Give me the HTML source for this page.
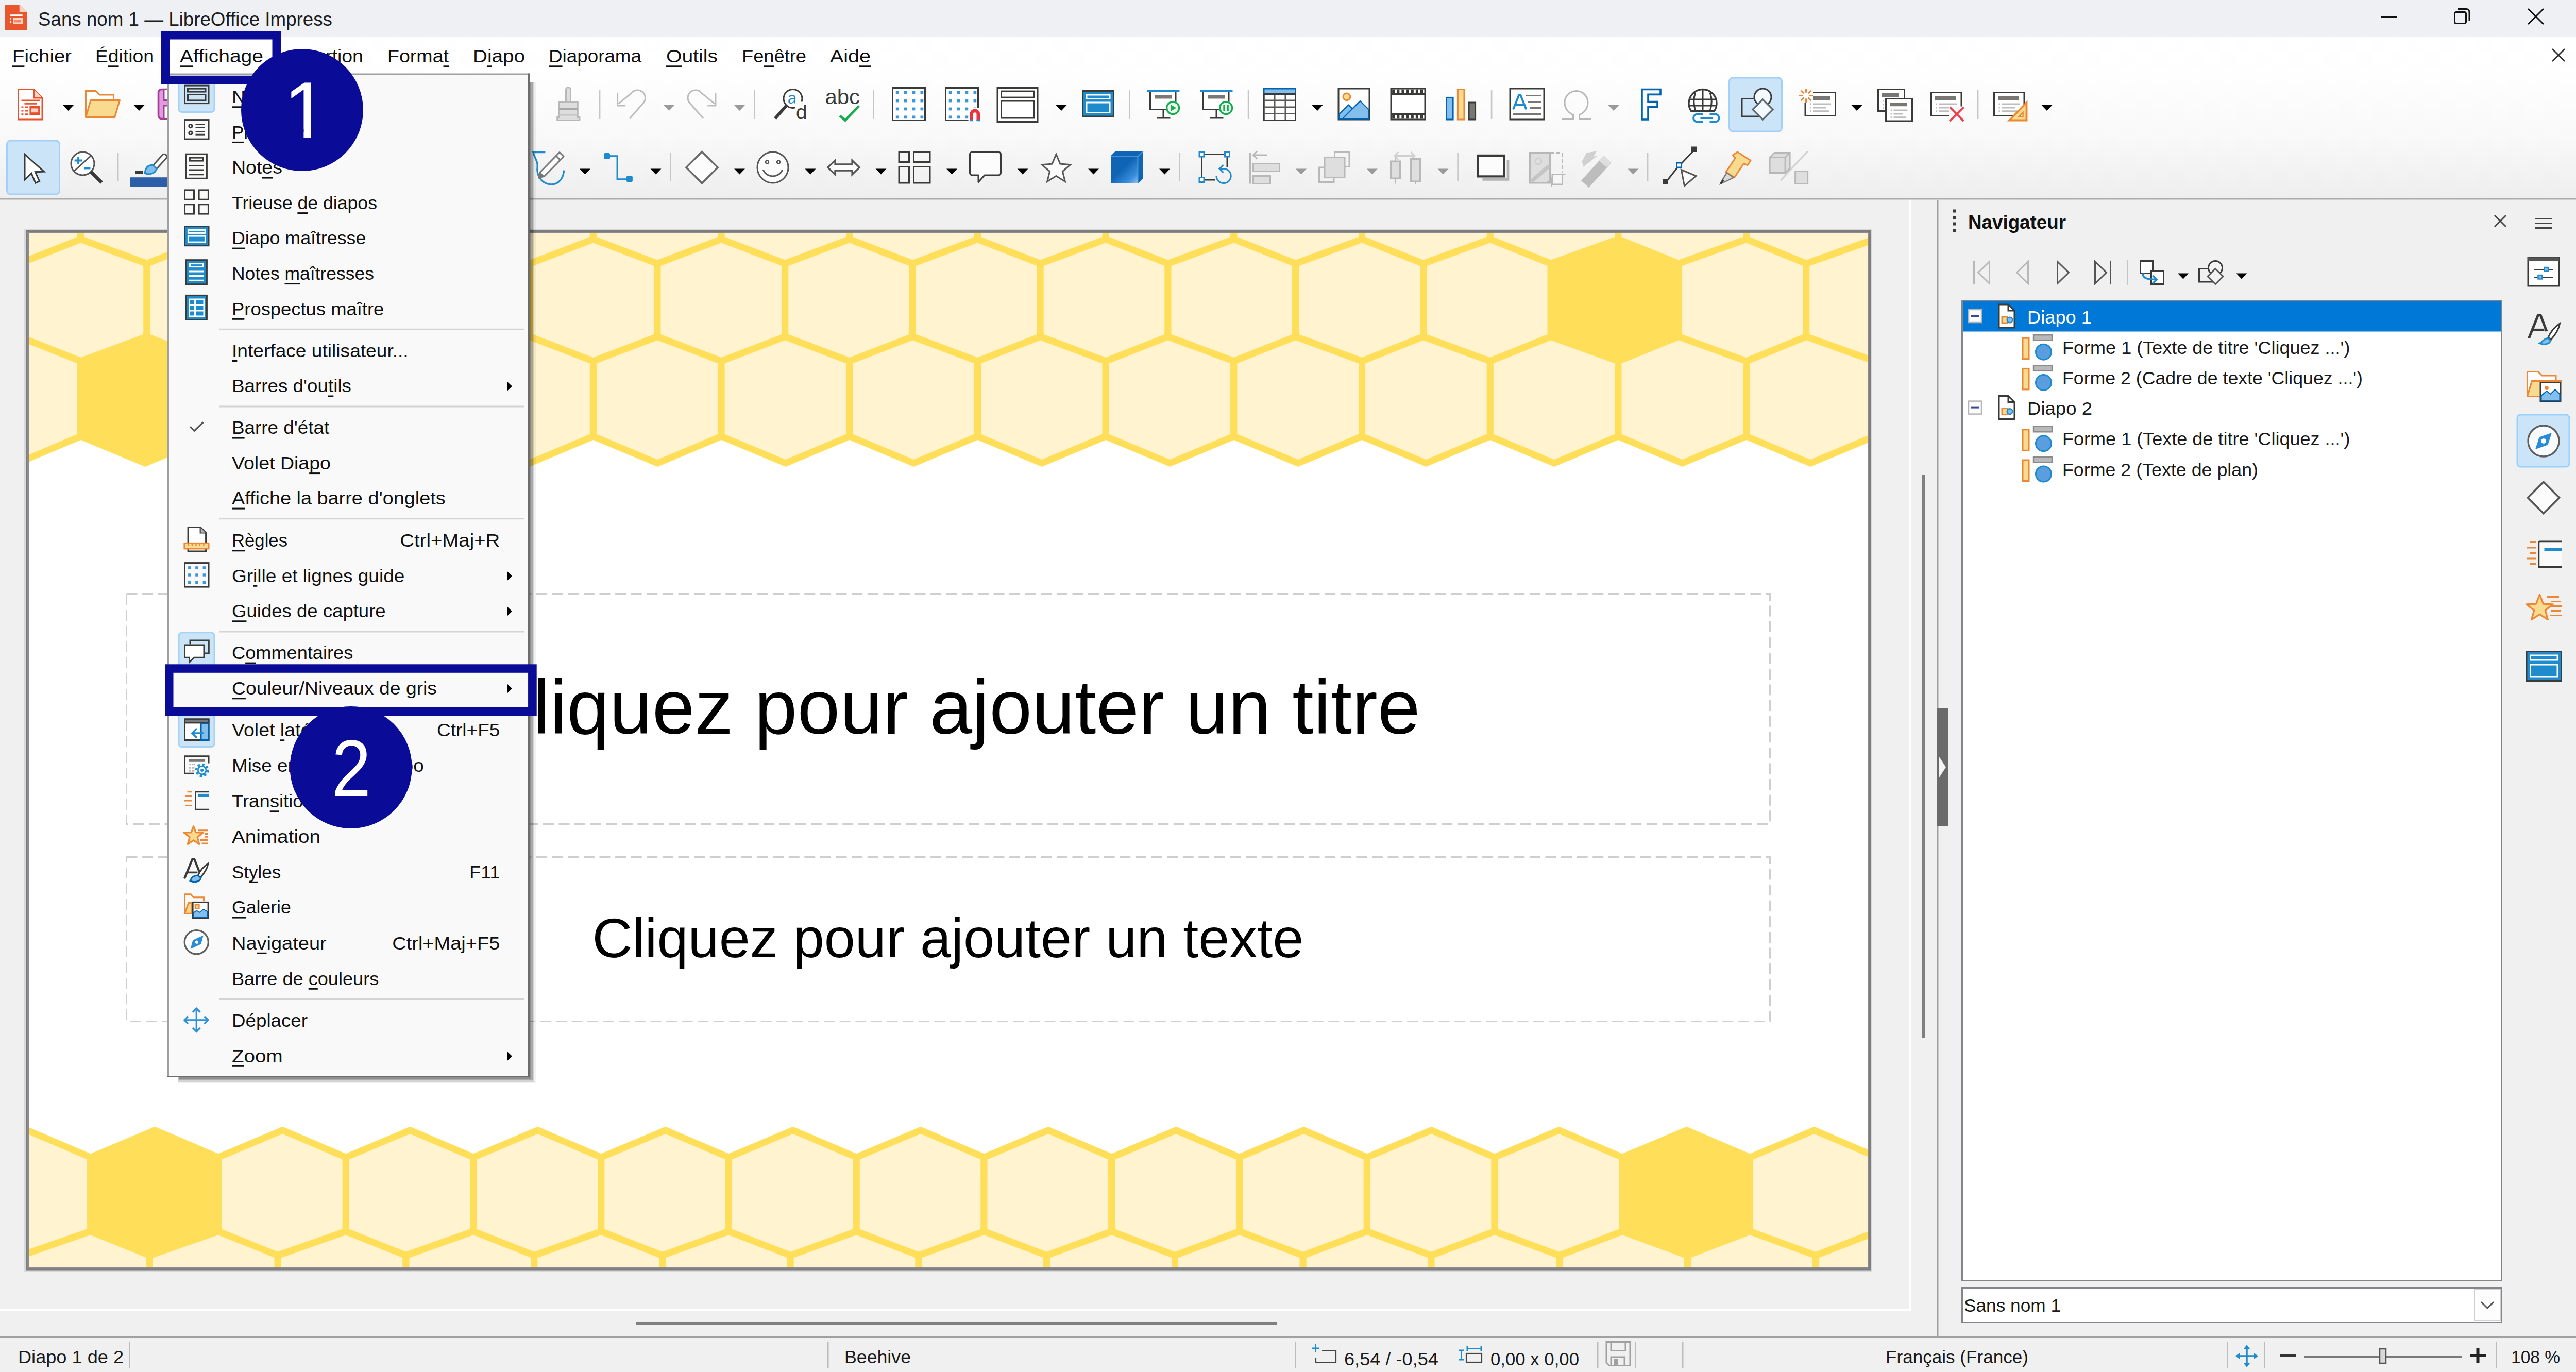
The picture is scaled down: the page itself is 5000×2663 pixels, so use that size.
<!DOCTYPE html>
<html lang="fr"><head><meta charset="utf-8"><title>Sans nom 1 — LibreOffice Impress</title>
<style>html,body{margin:0;padding:0;background:#f0f0f0;width:5000px;height:2663px;overflow:hidden}</style></head>
<body>
<svg width="5000" height="2663" viewBox="0 0 5000 2663" style="display:block;font-family:'Liberation Sans', sans-serif">
<rect x="0" y="0" width="5000" height="2663" fill="#f0f0f0" />
<!-- slide -->
<defs><clipPath id="slideclip"><rect x="56" y="453" width="3569" height="2006.5"/></clipPath></defs>
<rect x="47" y="444" width="3587" height="2024.5" fill="#d9d9d9" />
<rect x="50" y="447" width="3581" height="2018.5" fill="#7d7d7d" />
<rect x="53" y="450" width="3575" height="2012.5" fill="#8b8a93" />
<rect x="56" y="453" width="3569" height="2006.5" fill="#ffffff" />
<g clip-path="url(#slideclip)" stroke="#ffde59" stroke-width="13" stroke-linejoin="miter" fill="#fff4cf">
<polygon points="-92.1,264.5 -92.1,464.5 37.2,511.6 156.6,464.5 156.6,264.5"/>
<polygon points="156.6,264.5 156.6,464.5 285.0,511.6 405.3,464.5 405.3,264.5"/>
<polygon points="405.3,264.5 405.3,464.5 532.8,511.6 654.0,464.5 654.0,264.5"/>
<polygon points="654.0,264.5 654.0,464.5 780.5,511.6 902.7,464.5 902.7,264.5"/>
<polygon points="902.7,264.5 902.7,464.5 1028.2,511.6 1151.4,464.5 1151.4,264.5"/>
<polygon points="1151.4,264.5 1151.4,464.5 1276.0,511.6 1400.1,464.5 1400.1,264.5"/>
<polygon points="1400.1,264.5 1400.1,464.5 1523.8,511.6 1648.8,464.5 1648.8,264.5"/>
<polygon points="1648.8,264.5 1648.8,464.5 1771.5,511.6 1897.5,464.5 1897.5,264.5"/>
<polygon points="1897.5,264.5 1897.5,464.5 2019.2,511.6 2146.2,464.5 2146.2,264.5"/>
<polygon points="2146.2,264.5 2146.2,464.5 2267.0,511.6 2394.9,464.5 2394.9,264.5"/>
<polygon points="2394.9,264.5 2394.9,464.5 2514.8,511.6 2643.6,464.5 2643.6,264.5"/>
<polygon points="2643.6,264.5 2643.6,464.5 2762.5,511.6 2892.3,464.5 2892.3,264.5"/>
<polygon points="2892.3,264.5 2892.3,464.5 3010.2,511.6 3141.0,464.5 3141.0,264.5"/>
<polygon points="3141.0,264.5 3141.0,464.5 3258.0,511.6 3389.7,464.5 3389.7,264.5"/>
<polygon points="3389.7,264.5 3389.7,464.5 3505.8,511.6 3638.4,464.5 3638.4,264.5"/>
<polygon points="3638.4,264.5 3638.4,464.5 3753.5,511.6 3887.1,464.5 3887.1,264.5"/>
<polygon points="-92.1,464.5 37.2,511.6 37.2,653.5 -92.1,701.0 -210.5,653.5 -210.5,511.6"/>
<polygon points="156.6,464.5 285.0,511.6 285.0,653.5 156.6,701.0 37.2,653.5 37.2,511.6"/>
<polygon points="405.3,464.5 532.8,511.6 532.8,653.5 405.3,701.0 285.0,653.5 285.0,511.6"/>
<polygon points="654.0,464.5 780.5,511.6 780.5,653.5 654.0,701.0 532.8,653.5 532.8,511.6"/>
<polygon points="902.7,464.5 1028.2,511.6 1028.2,653.5 902.7,701.0 780.5,653.5 780.5,511.6"/>
<polygon points="1151.4,464.5 1276.0,511.6 1276.0,653.5 1151.4,701.0 1028.2,653.5 1028.2,511.6"/>
<polygon points="1400.1,464.5 1523.8,511.6 1523.8,653.5 1400.1,701.0 1276.0,653.5 1276.0,511.6"/>
<polygon points="1648.8,464.5 1771.5,511.6 1771.5,653.5 1648.8,701.0 1523.8,653.5 1523.8,511.6"/>
<polygon points="1897.5,464.5 2019.2,511.6 2019.2,653.5 1897.5,701.0 1771.5,653.5 1771.5,511.6"/>
<polygon points="2146.2,464.5 2267.0,511.6 2267.0,653.5 2146.2,701.0 2019.2,653.5 2019.2,511.6"/>
<polygon points="2394.9,464.5 2514.8,511.6 2514.8,653.5 2394.9,701.0 2267.0,653.5 2267.0,511.6"/>
<polygon points="2643.6,464.5 2762.5,511.6 2762.5,653.5 2643.6,701.0 2514.8,653.5 2514.8,511.6"/>
<polygon points="2892.3,464.5 3010.2,511.6 3010.2,653.5 2892.3,701.0 2762.5,653.5 2762.5,511.6"/>
<polygon fill="#ffde59" points="3141.0,464.5 3258.0,511.6 3258.0,653.5 3141.0,701.0 3010.2,653.5 3010.2,511.6"/>
<polygon points="3389.7,464.5 3505.8,511.6 3505.8,653.5 3389.7,701.0 3258.0,653.5 3258.0,511.6"/>
<polygon points="3638.4,464.5 3753.5,511.6 3753.5,653.5 3638.4,701.0 3505.8,653.5 3505.8,511.6"/>
<polygon points="37.2,653.5 156.6,701.0 156.6,847.0 33.4,899.0 -92.1,847.0 -92.1,701.0"/>
<polygon fill="#ffde59" points="285.0,653.5 405.3,701.0 405.3,847.0 282.0,899.0 156.6,847.0 156.6,701.0"/>
<polygon points="532.8,653.5 654.0,701.0 654.0,847.0 530.6,899.0 405.3,847.0 405.3,701.0"/>
<polygon points="780.5,653.5 902.7,701.0 902.7,847.0 779.2,899.0 654.0,847.0 654.0,701.0"/>
<polygon points="1028.2,653.5 1151.4,701.0 1151.4,847.0 1027.8,899.0 902.7,847.0 902.7,701.0"/>
<polygon points="1276.0,653.5 1400.1,701.0 1400.1,847.0 1276.4,899.0 1151.4,847.0 1151.4,701.0"/>
<polygon points="1523.8,653.5 1648.8,701.0 1648.8,847.0 1525.0,899.0 1400.1,847.0 1400.1,701.0"/>
<polygon points="1771.5,653.5 1897.5,701.0 1897.5,847.0 1773.6,899.0 1648.8,847.0 1648.8,701.0"/>
<polygon points="2019.2,653.5 2146.2,701.0 2146.2,847.0 2022.2,899.0 1897.5,847.0 1897.5,701.0"/>
<polygon points="2267.0,653.5 2394.9,701.0 2394.9,847.0 2270.8,899.0 2146.2,847.0 2146.2,701.0"/>
<polygon points="2514.8,653.5 2643.6,701.0 2643.6,847.0 2519.4,899.0 2394.9,847.0 2394.9,701.0"/>
<polygon points="2762.5,653.5 2892.3,701.0 2892.3,847.0 2768.0,899.0 2643.6,847.0 2643.6,701.0"/>
<polygon points="3010.2,653.5 3141.0,701.0 3141.0,847.0 3016.6,899.0 2892.3,847.0 2892.3,701.0"/>
<polygon points="3258.0,653.5 3389.7,701.0 3389.7,847.0 3265.2,899.0 3141.0,847.0 3141.0,701.0"/>
<polygon points="3505.8,653.5 3638.4,701.0 3638.4,847.0 3513.8,899.0 3389.7,847.0 3389.7,701.0"/>
<polygon points="3753.5,653.5 3887.1,701.0 3887.1,847.0 3762.4,899.0 3638.4,847.0 3638.4,701.0"/>
<polygon points="-71.9,2390.0 41.8,2436.5 41.8,2636.5 -207.0,2636.5 -207.0,2436.5"/>
<polygon points="175.8,2390.0 290.5,2436.5 290.5,2636.5 41.8,2636.5 41.8,2436.5"/>
<polygon points="423.6,2390.0 539.2,2436.5 539.2,2636.5 290.5,2636.5 290.5,2436.5"/>
<polygon points="671.3,2390.0 788.0,2436.5 788.0,2636.5 539.2,2636.5 539.2,2436.5"/>
<polygon points="919.0,2390.0 1036.8,2436.5 1036.8,2636.5 788.0,2636.5 788.0,2436.5"/>
<polygon points="1166.8,2390.0 1285.5,2436.5 1285.5,2636.5 1036.8,2636.5 1036.8,2436.5"/>
<polygon points="1414.5,2390.0 1534.2,2436.5 1534.2,2636.5 1285.5,2636.5 1285.5,2436.5"/>
<polygon points="1662.3,2390.0 1783.0,2436.5 1783.0,2636.5 1534.2,2636.5 1534.2,2436.5"/>
<polygon points="1910.0,2390.0 2031.8,2436.5 2031.8,2636.5 1783.0,2636.5 1783.0,2436.5"/>
<polygon points="2157.8,2390.0 2280.5,2436.5 2280.5,2636.5 2031.8,2636.5 2031.8,2436.5"/>
<polygon points="2405.6,2390.0 2529.2,2436.5 2529.2,2636.5 2280.5,2636.5 2280.5,2436.5"/>
<polygon points="2653.3,2390.0 2778.0,2436.5 2778.0,2636.5 2529.2,2636.5 2529.2,2436.5"/>
<polygon points="2901.1,2390.0 3026.8,2436.5 3026.8,2636.5 2778.0,2636.5 2778.0,2436.5"/>
<polygon points="3148.8,2390.0 3275.5,2436.5 3275.5,2636.5 3026.8,2636.5 3026.8,2436.5"/>
<polygon points="3396.6,2390.0 3524.2,2436.5 3524.2,2636.5 3275.5,2636.5 3275.5,2436.5"/>
<polygon points="3644.3,2390.0 3773.0,2436.5 3773.0,2636.5 3524.2,2636.5 3524.2,2436.5"/>
<polygon points="52.9,2193.7 175.8,2246.2 175.8,2390.0 41.8,2436.5 -71.9,2390.0 -71.9,2246.2"/>
<polygon fill="#ffde59" points="300.6,2193.7 423.6,2246.2 423.6,2390.0 290.5,2436.5 175.8,2390.0 175.8,2246.2"/>
<polygon points="548.4,2193.7 671.3,2246.2 671.3,2390.0 539.2,2436.5 423.6,2390.0 423.6,2246.2"/>
<polygon points="796.1,2193.7 919.0,2246.2 919.0,2390.0 788.0,2436.5 671.3,2390.0 671.3,2246.2"/>
<polygon points="1043.8,2193.7 1166.8,2246.2 1166.8,2390.0 1036.8,2436.5 919.0,2390.0 919.0,2246.2"/>
<polygon points="1291.6,2193.7 1414.5,2246.2 1414.5,2390.0 1285.5,2436.5 1166.8,2390.0 1166.8,2246.2"/>
<polygon points="1539.3,2193.7 1662.3,2246.2 1662.3,2390.0 1534.2,2436.5 1414.5,2390.0 1414.5,2246.2"/>
<polygon points="1787.1,2193.7 1910.0,2246.2 1910.0,2390.0 1783.0,2436.5 1662.3,2390.0 1662.3,2246.2"/>
<polygon points="2034.8,2193.7 2157.8,2246.2 2157.8,2390.0 2031.8,2436.5 1910.0,2390.0 1910.0,2246.2"/>
<polygon points="2282.6,2193.7 2405.6,2246.2 2405.6,2390.0 2280.5,2436.5 2157.8,2390.0 2157.8,2246.2"/>
<polygon points="2530.3,2193.7 2653.3,2246.2 2653.3,2390.0 2529.2,2436.5 2405.6,2390.0 2405.6,2246.2"/>
<polygon points="2778.1,2193.7 2901.1,2246.2 2901.1,2390.0 2778.0,2436.5 2653.3,2390.0 2653.3,2246.2"/>
<polygon points="3025.8,2193.7 3148.8,2246.2 3148.8,2390.0 3026.8,2436.5 2901.1,2390.0 2901.1,2246.2"/>
<polygon fill="#ffde59" points="3273.6,2193.7 3396.6,2246.2 3396.6,2390.0 3275.5,2436.5 3148.8,2390.0 3148.8,2246.2"/>
<polygon points="3521.3,2193.7 3644.3,2246.2 3644.3,2390.0 3524.2,2436.5 3396.6,2390.0 3396.6,2246.2"/>
<polygon points="3769.1,2193.7 3892.1,2246.2 3892.1,2390.0 3773.0,2436.5 3644.3,2390.0 3644.3,2246.2"/>
</g>
<rect x="245.5" y="1152.5" width="3190" height="447" fill="none" stroke="#cfcfcf" stroke-width="3" stroke-dasharray="21 9.6"/>
<rect x="245.5" y="1663.5" width="3190" height="319" fill="none" stroke="#cfcfcf" stroke-width="3" stroke-dasharray="21 9.6"/>
<text x="1841.5" y="1424" font-size="149" fill="#000" text-anchor="middle" >Cliquez pour ajouter un titre</text>
<text x="1840" y="1858" font-size="108" fill="#000" text-anchor="middle" >Cliquez pour ajouter un texte</text>
<!-- workspace -->
<rect x="3706" y="388" width="3" height="2156" fill="#ffffff" />
<rect x="0" y="2541" width="3709" height="3" fill="#ffffff" />
<rect x="3731" y="922" width="6" height="1093" fill="#808080" />
<rect x="1234" y="2565" width="1244" height="6" fill="#808080" />
<rect x="3759" y="388" width="3.5" height="2207" fill="#a0a0a0" />
<rect x="3760" y="1375" width="21" height="228" fill="#6a6a6a" />
<path d="M3764 1469 L3777 1489 L3764 1509 z" fill="#f4f4f4"/>
<!-- titlebar -->
<rect x="0" y="0" width="5000" height="72" fill="#eef0f4" />
<g transform="translate(9,9)"><path d="M2 0 H28.700 L43.800 15 V48 a2 2 0 0 1 -2 2 H2 a2 2 0 0 1 -2 -2 V2 a2 2 0 0 1 2 -2 z" fill="#e9562b"/><path d="M28.700 0 L43.800 15 H28.700 z" fill="#fbd3c6"/><rect x="10.100" y="19.200" width="24.600" height="2.800" fill="#fff"/><rect x="10.100" y="25.200" width="3" height="3.500" fill="#fff"/><rect x="10.100" y="32" width="3" height="3" fill="#fff"/><rect x="16.100" y="25.200" width="18.900" height="12.800" fill="#fcd6c9"/><rect x="19" y="29.700" width="13" height="4.800" fill="#f08a68"/></g>
<text x="74" y="49.5" font-size="36" fill="#1c1c1c" textLength="571" lengthAdjust="spacingAndGlyphs" >Sans nom 1 — LibreOffice Impress</text>
<g stroke="#111" stroke-width="3" fill="none"><path d="M4622 32.5 H4653"/><rect x="4764.5" y="23.5" width="22" height="22" rx="3"/><path d="M4771 17.5 H4787 a6 6 0 0 1 6 6 V40"/><path d="M4907 17 L4937 47 M4937 17 L4907 47"/></g>
<!-- menubar -->
<defs><linearGradient id="tbg" x1="0" y1="0" x2="0" y2="1"><stop offset="0" stop-color="#ffffff"/><stop offset="0.25" stop-color="#fefefe"/><stop offset="0.6" stop-color="#f9f9f9"/><stop offset="1" stop-color="#eeeeee"/></linearGradient></defs>
<rect x="0" y="72" width="5000" height="313" fill="url(#tbg)" />
<rect x="0" y="384" width="5000" height="3.5" fill="#adadad" />
<text x="24" y="121" font-size="35" fill="#111" textLength="115" lengthAdjust="spacingAndGlyphs" >Fichier</text><rect x="24.0" y="127.3" width="23.4" height="3" fill="#111"/>
<text x="185" y="121" font-size="35" fill="#111" textLength="114" lengthAdjust="spacingAndGlyphs" >Édition</text><rect x="209.9" y="127.3" width="20.7" height="3" fill="#111"/>
<text x="349" y="121" font-size="35" fill="#111" textLength="162" lengthAdjust="spacingAndGlyphs" >Affichage</text><rect x="349.0" y="127.3" width="26.0" height="3" fill="#111"/>
<text x="561" y="121" font-size="35" fill="#111" textLength="144" lengthAdjust="spacingAndGlyphs" >Insertion</text><rect x="561.0" y="127.3" width="10.4" height="3" fill="#111"/>
<text x="752" y="121" font-size="35" fill="#111" textLength="119" lengthAdjust="spacingAndGlyphs" >Format</text><rect x="860.5" y="127.3" width="10.5" height="3" fill="#111"/>
<text x="918" y="121" font-size="35" fill="#111" textLength="101" lengthAdjust="spacingAndGlyphs" >Diapo</text><rect x="945.9" y="127.3" width="8.6" height="3" fill="#111"/>
<text x="1065" y="121" font-size="35" fill="#111" textLength="180" lengthAdjust="spacingAndGlyphs" >Diaporama</text><rect x="1065.0" y="127.3" width="26.6" height="3" fill="#111"/>
<text x="1293" y="121" font-size="35" fill="#111" textLength="100" lengthAdjust="spacingAndGlyphs" >Outils</text><rect x="1293.0" y="127.3" width="30.4" height="3" fill="#111"/>
<text x="1440" y="121" font-size="35" fill="#111" textLength="125" lengthAdjust="spacingAndGlyphs" >Fenêtre</text><rect x="1482.3" y="127.3" width="20.2" height="3" fill="#111"/>
<text x="1611" y="121" font-size="35" fill="#111" textLength="79" lengthAdjust="spacingAndGlyphs" >Aide</text><rect x="1668.0" y="127.3" width="22.0" height="3" fill="#111"/>
<path d="M4954 95 L4978 119 M4978 95 L4954 119" stroke="#333" stroke-width="3" fill="none"/>
<!-- toolbars -->
<svg x="22" y="166" width="72" height="72" viewBox="0 0 24 24" overflow="visible"><path d="M4.5 2.500h10l5.500 5.500v14h-15.500z" fill="#fff" stroke="#e8502a" stroke-width="1"/><path d="M14.500 2.500v5.500h5.500" fill="#fbd5c9" stroke="#e8502a" stroke-width="1"/><path d="M6.500 9.700h12" stroke="#e8502a" stroke-width="1.100"/><path d="M8.500 11.800h8" stroke="#e8502a" stroke-width=".9"/><path d="M6.500 14h1.300M6.500 16.300h1.300M6.500 18.600h1.300M8.800 14h2M8.800 16.300h2M8.800 18.600h2" stroke="#e8502a" stroke-width="1"/><rect x="11.800" y="13.300" width="6.800" height="5.800" fill="#e8502a"/><rect x="13" y="14.800" width="4.400" height="2.600" fill="#fbd5c9"/></svg>
<path d="M122 204 h21 l-10.5 11 z" fill="#000"/>
<svg x="162" y="166" width="72" height="72" viewBox="0 0 24 24" overflow="visible"><path d="M1.500 20.500v-17h6.500l2.500 2.500h9v3.500" fill="#fff" stroke="#ed8733" stroke-width="1"/><path d="M1.500 20.500l3.200-11h18.800l-3.300 11z" fill="#f8db8f" stroke="#ed8733" stroke-width="1" stroke-linejoin="round"/></svg>
<path d="M259.5 204 h21 l-10.5 11 z" fill="#000"/>
<svg x="300" y="166" width="72" height="72" viewBox="0 0 24 24" overflow="visible"><path d="M2.500 4.500a2 2 0 0 1 2-2h15l2 2v15a2 2 0 0 1 -2 2h-15a2 2 0 0 1 -2-2z" fill="#e39be0" stroke="#a33e9a" stroke-width="1.200"/><rect x="6" y="2.500" width="11" height="7" fill="#fff" stroke="#a33e9a"/><rect x="6" y="13" width="12" height="8.500" fill="#fff" stroke="#a33e9a"/></svg>
<svg x="1065.5" y="166" width="72" height="72" viewBox="0 0 24 24" overflow="visible"><path d="M11 2.700a1.500 1.500 0 0 1 3 0v7.800h-3z" fill="#dedede" stroke="#b8b8b8" stroke-width="1"/><path d="M6.600 10.500h12v10h1.200v2h-14.400v-2h1.200z" fill="#dedede" stroke="#b8b8b8" stroke-width="1"/><path d="M6.600 15h12" stroke="#a8a8a8" stroke-width="1.400"/><path d="M6.600 19h12" stroke="#c4c4c4" stroke-width="1"/></svg>
<rect x="1162.8" y="175" width="2.6" height="56" fill="#c6c6c6" />
<svg x="1189" y="166" width="72" height="72" viewBox="0 0 24 24" overflow="visible"><path d="M11.100 21.300l8.900-10.100a5 5 0 0 0 -7.700-6.400l-8.500 7" fill="none" stroke="#bcbcbc" stroke-width="1" /><path d="M3.200 5v8h5.200" fill="none" stroke="#bcbcbc" stroke-width="1" /></svg>
<path d="M1288.2 204 h21 l-10.5 11 z" fill="#9a9a9a"/>
<svg x="1326.5" y="166" width="72" height="72" viewBox="0 0 24 24" overflow="visible"><path d="M12.900 21.300l-8.900-10.100a5 5 0 0 1 7.700-6.400l8.500 7" fill="none" stroke="#bcbcbc" stroke-width="1" /><path d="M20.800 5v8h-5.200" fill="none" stroke="#bcbcbc" stroke-width="1" /></svg>
<path d="M1425 204 h21 l-10.5 11 z" fill="#9a9a9a"/>
<rect x="1463.3" y="175" width="2.6" height="56" fill="#c6c6c6" />
<svg x="1497" y="166" width="72" height="72" viewBox="0 0 24 24" overflow="visible"><circle cx="14" cy="8.500" r="6" fill="#fff" stroke="#3a3a38" stroke-width="1"/><path d="M9.800 13l-7.300 8.300" fill="none" stroke="#3a3a38" stroke-width="2" /><text x="10.600" y="11.800" font-size="10.500" fill="#1e8bcd" font-family="Liberation Sans">a</text><rect x="15.500" y="10.500" width="8" height="12" fill="#fcfcfc"/><text x="16" y="21.500" font-size="13" fill="#3a3a38" font-family="Liberation Sans">d</text></svg>
<svg x="1598.5" y="166" width="72" height="72" viewBox="0 0 24 24" overflow="visible"><text x="1" y="12" font-size="13.500" fill="#3a3a38" font-family="Liberation Sans" textLength="22.500" lengthAdjust="spacingAndGlyphs">abc</text><path d="M10.500 19.500l3.500 3l9-9.300" fill="none" stroke="#18ab50" stroke-width="1.6" /></svg>
<rect x="1694.3" y="175" width="2.6" height="56" fill="#c6c6c6" />
<svg x="1728" y="166" width="72" height="72" viewBox="0 0 24 24" overflow="visible"><rect x="1.500" y="1.500" width="21" height="21" fill="#fff" stroke="#3a3a38" stroke-width="1"/><rect x="3.6" y="3.6" width="1.9" height="1.9" fill="#3a96dd"/><rect x="3.6" y="8.9" width="1.9" height="1.9" fill="#3a96dd"/><rect x="3.6" y="14.2" width="1.9" height="1.9" fill="#3a96dd"/><rect x="3.6" y="19.5" width="1.9" height="1.9" fill="#3a96dd"/><rect x="8.9" y="3.6" width="1.9" height="1.9" fill="#3a96dd"/><rect x="8.9" y="8.9" width="1.9" height="1.9" fill="#3a96dd"/><rect x="8.9" y="14.2" width="1.9" height="1.9" fill="#3a96dd"/><rect x="8.9" y="19.5" width="1.9" height="1.9" fill="#3a96dd"/><rect x="14.2" y="3.6" width="1.9" height="1.9" fill="#3a96dd"/><rect x="14.2" y="8.9" width="1.9" height="1.9" fill="#3a96dd"/><rect x="14.2" y="14.2" width="1.9" height="1.9" fill="#3a96dd"/><rect x="14.2" y="19.5" width="1.9" height="1.9" fill="#3a96dd"/><rect x="19.5" y="3.6" width="1.9" height="1.9" fill="#3a96dd"/><rect x="19.5" y="8.9" width="1.9" height="1.9" fill="#3a96dd"/><rect x="19.5" y="14.2" width="1.9" height="1.9" fill="#3a96dd"/><rect x="19.5" y="19.5" width="1.9" height="1.9" fill="#3a96dd"/></svg>
<svg x="1831" y="166" width="72" height="72" viewBox="0 0 24 24" overflow="visible"><rect x="1.500" y="1.500" width="21" height="21" fill="#fff" stroke="#3a3a38" stroke-width="1"/><rect x="3.6" y="3.6" width="1.9" height="1.9" fill="#3a96dd"/><rect x="3.6" y="8.9" width="1.9" height="1.9" fill="#3a96dd"/><rect x="3.6" y="14.2" width="1.9" height="1.9" fill="#3a96dd"/><rect x="3.6" y="19.5" width="1.9" height="1.9" fill="#3a96dd"/><rect x="8.9" y="3.6" width="1.9" height="1.9" fill="#3a96dd"/><rect x="8.9" y="8.9" width="1.9" height="1.9" fill="#3a96dd"/><rect x="8.9" y="14.2" width="1.9" height="1.9" fill="#3a96dd"/><rect x="8.9" y="19.5" width="1.9" height="1.9" fill="#3a96dd"/><rect x="14.2" y="3.6" width="1.9" height="1.9" fill="#3a96dd"/><rect x="14.2" y="8.9" width="1.9" height="1.9" fill="#3a96dd"/><rect x="14.2" y="14.2" width="1.9" height="1.9" fill="#3a96dd"/><rect x="14.2" y="19.5" width="1.9" height="1.9" fill="#3a96dd"/><rect x="19.5" y="3.6" width="1.9" height="1.9" fill="#3a96dd"/><rect x="19.5" y="8.9" width="1.9" height="1.9" fill="#3a96dd"/><rect x="19.5" y="14.2" width="1.9" height="1.9" fill="#3a96dd"/><rect x="19.5" y="19.5" width="1.9" height="1.9" fill="#3a96dd"/><rect x="16.200" y="14.500" width="8" height="9" fill="#fcfcfc"/><path d="M18.200 23v-4.500a2.200 2.200 0 0 1 4.400 0v4.500" fill="none" stroke="#e9333f" stroke-width="2.2" /><path d="M17.100 22.500h2.200M21.500 22.500h2.200" stroke="#1e8bcd" stroke-width="1.200"/></svg>
<svg x="1939" y="166" width="72" height="72" viewBox="0 0 24 24" overflow="visible"><rect x="-1" y="1.500" width="26" height="22" fill="#fff" stroke="#3a3a38" stroke-width="1"/><rect x="1.500" y="3.700" width="21" height="4" fill="none" stroke="#3a3a38" stroke-width="1" /><rect x="1.500" y="10" width="21" height="11" fill="none" stroke="#3a3a38" stroke-width="1" /></svg>
<path d="M2049.5 204 h21 l-10.5 11 z" fill="#000"/>
<svg x="2095.5" y="166" width="72" height="72" viewBox="0 0 24 24" overflow="visible"><rect x="2" y="3.500" width="20" height="16.500" fill="#1e8bcd" stroke="#3a3a38" stroke-width="1"/><rect x="4.500" y="6" width="15" height="2.500" fill="#1e8bcd" stroke="#fff" stroke-width="1"/><rect x="4.500" y="11" width="15" height="6.500" fill="#1e8bcd" stroke="#fff" stroke-width="1"/></svg>
<rect x="2191.3" y="175" width="2.6" height="56" fill="#c6c6c6" />
<svg x="2222" y="166" width="72" height="72" viewBox="0 0 24 24" overflow="visible"><path d="M1.500 3.500h21" fill="none" stroke="#1e8bcd" stroke-width="1" /><path d="M3.500 4v11.500h16.500v-11.500" fill="#fff" stroke="#3a3a38" stroke-width="1"/><rect x="6.500" y="6.300" width="11" height="2.200" fill="#797774"/><path d="M12 15.500v5.500M8 21h8.500" fill="none" stroke="#3a3a38" stroke-width="1" /><circle cx="18.200" cy="14.500" r="4.700" fill="#fcfcfc"/><circle cx="18.200" cy="14.500" r="4" fill="#e8f7ee" stroke="#18ab50" stroke-width="1.100"/><path d="M16.700 12.300v4.400l3.700-2.200z" fill="#18ab50"/></svg>
<svg x="2325" y="166" width="72" height="72" viewBox="0 0 24 24" overflow="visible"><path d="M1.500 3.500h21" fill="none" stroke="#1e8bcd" stroke-width="1" /><path d="M3.500 4v11.500h16.500v-11.500" fill="#fff" stroke="#3a3a38" stroke-width="1"/><rect x="6.500" y="6.300" width="11" height="2.200" fill="#797774"/><path d="M12 15.500v5.500M8 21h8.500" fill="none" stroke="#3a3a38" stroke-width="1" /><circle cx="18.200" cy="14.500" r="4.700" fill="#fcfcfc"/><circle cx="18.200" cy="14.500" r="4" fill="#e8f7ee" stroke="#18ab50" stroke-width="1.100"/><path d="M17 12.500v4M19.400 12.500v4" stroke="#18ab50" stroke-width="1.100"/></svg>
<rect x="2421.8" y="175" width="2.6" height="56" fill="#c6c6c6" />
<svg x="2448.5" y="166" width="72" height="72" viewBox="0 0 24 24" overflow="visible"><rect x="1.500" y="2" width="20.500" height="20.500" fill="#fff" stroke="#3a3a38" stroke-width="1"/><rect x="1.500" y="2" width="20.500" height="3.500" fill="#83beec" stroke="#0063b1" stroke-width="1"/><path d="M2 9.700h20M2 14h20M2 18.200h20M8.500 5.500v17M15.500 5.500v17" fill="none" stroke="#5a5a58" stroke-width="1" /><rect x="1.500" y="5.500" width="20.500" height="17" fill="none" stroke="#3a3a38" stroke-width="1" /></svg>
<path d="M2546.5 204 h21 l-10.5 11 z" fill="#000"/>
<svg x="2592" y="166" width="72" height="72" viewBox="0 0 24 24" overflow="visible"><rect x="2" y="2" width="20" height="20" fill="#fff" stroke="#3a3a38" stroke-width="1"/><circle cx="7.300" cy="7.300" r="2.300" fill="#f8db8f" stroke="#ed8733" stroke-width="1"/><path d="M2.500 21.500v-3l6-6l2.500 2.500l5-5l5.500 5.500v6z" fill="#83beec" stroke="#0063b1" stroke-width=".8" stroke-linejoin="round"/><path d="M5 21l8.500-8.500" stroke="#0063b1" stroke-width=".8"/></svg>
<svg x="2695.5" y="166" width="72" height="72" viewBox="0 0 24 24" overflow="visible"><rect x="1.500" y="2" width="22" height="20" fill="#fff" stroke="#3a3a38" stroke-width="1"/><path d="M1.500 5.500h22M1.500 18.500h22" fill="none" stroke="#3a3a38" stroke-width="1" /><rect x="2.2" y="2.500" width="1.700" height="2.400" fill="#3a3a38"/><rect x="2.2" y="19" width="1.700" height="2.500" fill="#3a3a38"/><rect x="5.25" y="2.500" width="1.700" height="2.400" fill="#3a3a38"/><rect x="5.25" y="19" width="1.700" height="2.500" fill="#3a3a38"/><rect x="8.3" y="2.500" width="1.700" height="2.400" fill="#3a3a38"/><rect x="8.3" y="19" width="1.700" height="2.500" fill="#3a3a38"/><rect x="11.35" y="2.500" width="1.700" height="2.400" fill="#3a3a38"/><rect x="11.35" y="19" width="1.700" height="2.500" fill="#3a3a38"/><rect x="14.4" y="2.500" width="1.700" height="2.400" fill="#3a3a38"/><rect x="14.4" y="19" width="1.700" height="2.500" fill="#3a3a38"/><rect x="17.45" y="2.500" width="1.700" height="2.400" fill="#3a3a38"/><rect x="17.45" y="19" width="1.700" height="2.500" fill="#3a3a38"/><rect x="20.5" y="2.500" width="1.700" height="2.400" fill="#3a3a38"/><rect x="20.5" y="19" width="1.700" height="2.500" fill="#3a3a38"/></svg>
<svg x="2797" y="166" width="72" height="72" viewBox="0 0 24 24" overflow="visible"><rect x="3.500" y="7.800" width="4.200" height="14.200" fill="#83beec" stroke="#0063b1" stroke-width="1"/><rect x="10.800" y="2.500" width="4.200" height="19.500" fill="#f8db8f" stroke="#ed8733" stroke-width="1"/><rect x="18" y="11" width="4.200" height="11" fill="#797774" stroke="#3a3a38" stroke-width="1"/></svg>
<rect x="2893.8" y="175" width="2.6" height="56" fill="#c6c6c6" />
<svg x="2926.5" y="166" width="72" height="72" viewBox="0 0 24 24" overflow="visible"><rect x="1.500" y="2" width="22" height="20" fill="#fff" stroke="#3a3a38" stroke-width="1"/><path d="M3.500 15.500l3.800-9.500h.9l3.800 9.500M5 12.500h5.500" fill="none" stroke="#1e8bcd" stroke-width="1.3" /><path d="M11.500 6.500h10M13 10.500h8.500M14.500 14.500h7M3.500 18.500h18" fill="none" stroke="#797774" stroke-width="1" /></svg>
<svg x="3023.5" y="166" width="72" height="72" viewBox="0 0 24 24" overflow="visible"><path d="M2.500 21.500h7.500v-2.500c-3.500-1.500-5.500-4.500-5.500-8a7.500 7.500 0 0 1 15 0c0 3.500-2 6.500-5.500 8v2.500h7.500" fill="none" stroke="#b8b8b8" stroke-width="1" /></svg>
<path d="M3121.5 204 h21 l-10.5 11 z" fill="#9a9a9a"/>
<svg x="3169" y="166" width="72" height="72" viewBox="0 0 24 24" overflow="visible"><path d="M6 2.500h12v3.300h-8v4.700h6v3.300h-6v8.200h-4z" fill="#fff" stroke="#0063b1" stroke-width="1.200"/></svg>
<svg x="3272" y="166" width="72" height="72" viewBox="0 0 24 24" overflow="visible"><g transform="translate(0,2)"><path d="M3.500 14.500a8.500 8.500 0 0 1 -1.500-5a9 9 0 0 1 18 0a8.500 8.500 0 0 1 -1.500 5z" fill="#fff" stroke="#3a3a38" stroke-width="1.100"/><path d="M2.500 7h17M2 11h18M11 1v13.500M6.300 2.500c-1.300 3.500-1.300 8 0 12M15.700 2.500c1.300 3.500 1.300 8 0 12" fill="none" stroke="#3a3a38" stroke-width="1" /><rect x="4.500" y="15.200" width="19.500" height="8" fill="#f9f9f9"/><path d="M11 21.500h-3.500a2.500 2.500 0 0 1 0-5h3.500M15.500 16.500h3.500a2.500 2.500 0 0 1 0 5h-3.500M9.500 19h8" fill="none" stroke="#1e8bcd" stroke-width="1.3" /></g></svg>
<rect x="3356.5" y="151" width="102" height="104" rx="7" fill="#cce4f7" stroke="#a3d0f7" stroke-width="3"/>
<svg x="3373.5" y="166" width="72" height="72" viewBox="0 0 24 24" overflow="visible"><rect x="2.500" y="8.500" width="11.500" height="11.500" fill="none" stroke="#3a3a38" stroke-width="1" /><circle cx="16" cy="7.500" r="5.500" fill="#f4f9fd" stroke="#3a3a38" stroke-width="1"/><path d="M9.500 15.500l6.500-6.500l6.500 6.500l-6.500 6.500z" fill="#f4f9fd" stroke="#5f6a73" stroke-width="1.100"/></svg>
<svg x="3492" y="166" width="72" height="72" viewBox="0 0 24 24" overflow="visible"><rect x="4" y="4.5" width="19.5" height="15" fill="#fff" stroke="#3a3a38" stroke-width="1"/><rect x="6.5" y="7.0" width="13.5" height="2.400" fill="#797774"/><path d="M7 12.0h.8M9 12.0h11.5M7 14.3h.8M9 14.3h8.5M7 16.6h.8M9 16.6h10.5" stroke="#bdbdbd" stroke-width="1"/><rect x="0" y="2" width="9" height="9" fill="#fbfbfb"/><path d="M4.500 2v9M0 6.500h9M1.300 3.300l6.400 6.400M7.700 3.300l-6.400 6.400" fill="none" stroke="#ed8733" stroke-width="1" /><circle cx="4.500" cy="6.500" r="2" fill="#fff"/></svg>
<path d="M3593.5 204 h21 l-10.5 11 z" fill="#000"/>
<svg x="3641" y="166" width="72" height="72" viewBox="0 0 24 24" overflow="visible"><rect x="1.5" y="2.5" width="17" height="14" fill="#fff" stroke="#3a3a38" stroke-width="1"/><rect x="4.0" y="5.0" width="11" height="2.400" fill="#797774"/><path d="M4.5 10.0h.8M6.5 10.0h9M4.5 12.3h.8M6.5 12.3h6M4.5 14.6h.8M6.5 14.6h8" stroke="#bdbdbd" stroke-width="1"/><rect x="6.5" y="8.5" width="17" height="14.5" fill="#fff" stroke="#3a3a38" stroke-width="1"/><rect x="9.0" y="11.0" width="11" height="2.400" fill="#797774"/><path d="M9.5 16.0h.8M11.5 16.0h9M9.5 18.3h.8M11.5 18.3h6M9.5 20.6h.8M11.5 20.6h8" stroke="#bdbdbd" stroke-width="1"/></svg>
<svg x="3744" y="166" width="72" height="72" viewBox="0 0 24 24" overflow="visible"><rect x="1.5" y="4.5" width="19.5" height="15" fill="#fff" stroke="#3a3a38" stroke-width="1"/><rect x="4.0" y="7.0" width="13.5" height="2.400" fill="#797774"/><path d="M4.5 12.0h.8M6.5 12.0h11.5M4.5 14.3h.8M6.5 14.3h8.5M4.5 16.6h.8M6.5 16.6h10.5" stroke="#bdbdbd" stroke-width="1"/><rect x="13" y="13.500" width="10" height="10" fill="#f9f9f9"/><path d="M13.500 14l9 9M22.500 14l-9 9" fill="none" stroke="#e9414b" stroke-width="1.3" /></svg>
<rect x="3837.8" y="175" width="2.6" height="56" fill="#c6c6c6" />
<svg x="3866" y="166" width="72" height="72" viewBox="0 0 24 24" overflow="visible"><rect x="1.5" y="4.5" width="19.5" height="15" fill="#fff" stroke="#3a3a38" stroke-width="1"/><rect x="4.0" y="7.0" width="13.5" height="2.400" fill="#797774"/><path d="M4.5 12.0h.8M6.5 12.0h11.5M4.5 14.3h.8M6.5 14.3h8.5M4.5 16.6h.8M6.5 16.6h10.5" stroke="#bdbdbd" stroke-width="1"/><path d="M11.500 22.500l11-11.500v11.500z" fill="#f8db8f" stroke="#ed8733" stroke-width="1.300" stroke-linejoin="miter"/><path d="M17.500 20.200l2.700-2.800v2.800z" fill="#fff" stroke="#ed8733" stroke-width=".8"/></svg>
<path d="M3962.5 204 h21 l-10.5 11 z" fill="#000"/>
<rect x="13.5" y="273" width="102" height="104" rx="7" fill="#cce4f7" stroke="#a3d0f7" stroke-width="3"/>
<svg x="28.5" y="289" width="72" height="72" viewBox="0 0 24 24" overflow="visible"><path d="M6.500 3.500v16.500l4.300-4.200l2.700 6.200l2.500-1.100l-2.700-6l5.700-.2z" fill="#fff" stroke="#3a3a38" stroke-width="1" stroke-linejoin="miter"/></svg>
<svg x="132" y="289" width="72" height="72" viewBox="0 0 24 24" overflow="visible"><circle cx="9.500" cy="9.500" r="7.500" fill="#fff" stroke="#555" stroke-width="1"/><path d="M3.800 14.500l11-10" stroke="#555" stroke-width="1"/><path d="M14.800 14.800l7 7" stroke="#3a3a38" stroke-width="2.200"/><path d="M4.200 7.500h5M6.700 5v5" stroke="#1e8bcd" stroke-width="1.300"/><path d="M10.500 12.500h4" stroke="#1e8bcd" stroke-width="1.300"/></svg>
<rect x="227.8" y="296" width="2.6" height="56" fill="#c6c6c6" />
<svg x="253" y="289" width="72" height="72" viewBox="0 0 24 24" overflow="visible"><rect x="0" y="18.400" width="24" height="6.100" fill="#2d5fa9"/><rect x="3.300" y="14.200" width="5" height="2.100" fill="#3a3a38"/><path d="M14.500 10.800l6.400-7a1.600 1.600 0 0 1 2.300 2.200l-6.300 7z" fill="#fff" stroke="#555" stroke-width="1"/><path d="M14.700 10.600c-3-.6-5 1.400-5.300 5.200c3 1.200 6.600.2 7.600-2.900z" fill="#83beec" stroke="#1e8bcd" stroke-width="1"/></svg>
<svg x="1029" y="289" width="72" height="72" viewBox="0 0 24 24" overflow="visible"><path d="M9.800 2.200h-7.800c.8 4 3.200 5.500 2.700 9.500c-.6 4.500 1.800 10.300 7.800 11.200c5 .7 9-3 9.400-9" fill="none" stroke="#1e8bcd" stroke-width="1.1" /><path d="M6.500 15l12.500-12.800l2.700 2.700l-12.500 12.800l-3.700 1z" fill="#fdfdfd" stroke="#777" stroke-width="1" stroke-linejoin="round"/><path d="M16.800 4.500l2.700 2.700" stroke="#777"/><path d="M6.500 15l2.700 2.700l-3.700 1z" fill="#797774"/></svg>
<path d="M1125 327.5 h21 l-10.5 11 z" fill="#000"/>
<svg x="1164" y="289" width="72" height="72" viewBox="0 0 24 24" overflow="visible"><path d="M4.700 4.600h6.700v15h8" fill="none" stroke="#1e8bcd" stroke-width="1.1" /><rect x="2.700" y="2.700" width="4" height="4" rx="1" fill="#1e8bcd"/><rect x="17.300" y="17.400" width="4" height="4" rx="1" fill="#1e8bcd"/></svg>
<path d="M1262.5 327.5 h21 l-10.5 11 z" fill="#000"/>
<rect x="1300.3" y="296" width="2.6" height="56" fill="#c6c6c6" />
<svg x="1326.5" y="289" width="72" height="72" viewBox="0 0 24 24" overflow="visible"><path d="M12 1.800l10.200 10.200l-10.200 10.200l-10.200-10.200z" fill="#fcfcfc" stroke="#6a6a6a" stroke-width="1.200"/></svg>
<path d="M1425 327.5 h21 l-10.5 11 z" fill="#000"/>
<svg x="1464" y="289" width="72" height="72" viewBox="0 0 24 24" overflow="visible"><circle cx="12" cy="12" r="10" fill="#fcfcfc" stroke="#555" stroke-width="1"/><circle cx="8.300" cy="8.500" r="1" fill="none" stroke="#555" stroke-width="0.9" /><circle cx="15.700" cy="8.500" r="1" fill="none" stroke="#555" stroke-width="0.9" /><path d="M5.800 13.500c2 5.500 10.400 5.500 12.400 0" fill="none" stroke="#555" stroke-width="1" /></svg>
<path d="M1562.5 327.5 h21 l-10.5 11 z" fill="#000"/>
<svg x="1601.5" y="289" width="72" height="72" viewBox="0 0 24 24" overflow="visible"><path d="M1.800 12l4.700-4.600v2.600h11v-2.600l4.700 4.600l-4.700 4.600v-2.600h-11v2.600z" fill="#fcfcfc" stroke="#555" stroke-width="1.100" stroke-linejoin="miter"/></svg>
<path d="M1699.5 327.5 h21 l-10.5 11 z" fill="#000"/>
<svg x="1739" y="289" width="72" height="72" viewBox="0 0 24 24" overflow="visible"><rect x="2" y="2" width="6.500" height="6.500" fill="none" stroke="#3a3a38" stroke-width="1" /><rect x="11.500" y="2" width="10.500" height="6.500" fill="none" stroke="#3a3a38" stroke-width="1" /><rect x="2" y="11.500" width="6.500" height="10.500" fill="none" stroke="#3a3a38" stroke-width="1" /><rect x="11.500" y="11.500" width="10.500" height="10.500" fill="none" stroke="#3a3a38" stroke-width="1" /></svg>
<path d="M1837 327.5 h21 l-10.5 11 z" fill="#000"/>
<svg x="1876.5" y="289" width="72" height="72" viewBox="0 0 24 24" overflow="visible"><path d="M3.500 2h17a1.500 1.500 0 0 1 1.500 1.500v12a1.500 1.500 0 0 1 -1.500 1.500h-9l-4 4.500v-4.500h-4a1.500 1.500 0 0 1 -1.500-1.500v-12a1.500 1.500 0 0 1 1.500-1.500z" fill="#fcfcfc" stroke="#3a3a38" stroke-width="1" stroke-linejoin="round"/></svg>
<path d="M1974.5 327.5 h21 l-10.5 11 z" fill="#000"/>
<svg x="2014" y="289" width="72" height="72" viewBox="0 0 24 24" overflow="visible"><path transform="translate(12 12.3) scale(.9) translate(-12 -12)" d="M12 2.200l2.900 6.900l7.300.6l-5.600 4.800l1.800 7.300l-6.400-4l-6.400 4l1.800-7.300l-5.600-4.800l7.300-.6z" fill="#fcfcfc" stroke="#555" stroke-width="1.100" stroke-linejoin="miter"/></svg>
<path d="M2112 327.5 h21 l-10.5 11 z" fill="#000"/>
<svg x="2151.5" y="289" width="72" height="72" viewBox="0 0 24 24" overflow="visible"><defs><linearGradient id="cg" x1="0" y1="0" x2="1" y2="1"><stop offset=".45" stop-color="#0f64b5"/><stop offset=".8" stop-color="#3a8fdc"/><stop offset="1" stop-color="#8fc3f2"/></linearGradient></defs><path d="M4.500 1.500h18v17.500l-3 3h-18v-17.500z" fill="#0f64b5"/><rect x="1.500" y="5" width="17.500" height="17" fill="url(#cg)"/><path d="M1.500 5h17.500v17" fill="none" stroke="#5ba3e3" stroke-width=".7" opacity=".7"/><path d="M19 5l3.500-3.500" stroke="#5ba3e3" stroke-width=".7" opacity=".7"/></svg>
<path d="M2250 327.5 h21 l-10.5 11 z" fill="#000"/>
<rect x="2288.3" y="296" width="2.6" height="56" fill="#c6c6c6" />
<svg x="2322" y="289" width="72" height="72" viewBox="0 0 24 24" overflow="visible"><path d="M3.500 3.500h16.500v8.500M3.500 3.500v16.500h8.500" fill="none" stroke="#3a3a38" stroke-width="1" /><rect x="2" y="2" width="3" height="3" fill="#fff" stroke="#1e8bcd" stroke-width="1"/><rect x="18.500" y="2" width="3" height="3" fill="#fff" stroke="#1e8bcd" stroke-width="1"/><rect x="2" y="18.500" width="3" height="3" fill="#fff" stroke="#1e8bcd" stroke-width="1"/><path d="M13 17.500a4.700 4.700 0 1 0 4.700-4.700h-2.500" fill="none" stroke="#1e8bcd" stroke-width="1" /><path d="M17.500 10.300l-2.500 2.500l2.500 2.500" fill="none" stroke="#1e8bcd" stroke-width="1" /></svg>
<svg x="2419" y="289" width="72" height="72" viewBox="0 0 24 24" overflow="visible"><path d="M2.500 2.500v20" fill="none" stroke="#b8b8b8" stroke-width="1" /><path d="M13.500 4h-9M7 1.500l-2.500 2.500l2.500 2.500" fill="none" stroke="#b8b8b8" stroke-width="1" /><rect x="4.500" y="9.500" width="17" height="5" fill="#dedede" stroke="#b8b8b8" stroke-width="1"/><rect x="4.500" y="17.500" width="11" height="5" fill="#dedede" stroke="#b8b8b8" stroke-width="1"/></svg>
<path d="M2515 327.5 h21 l-10.5 11 z" fill="#9a9a9a"/>
<svg x="2554.5" y="289" width="72" height="72" viewBox="0 0 24 24" overflow="visible"><path d="M12 5v-3h9.500v9.500h-3M5 12h-3v9.500h9.500v-3" fill="none" stroke="#b8b8b8" stroke-width="1" /><rect x="5.500" y="5.500" width="13" height="13" fill="#dedede" stroke="#b8b8b8" stroke-width="1"/></svg>
<path d="M2653 327.5 h21 l-10.5 11 z" fill="#9a9a9a"/>
<svg x="2692" y="289" width="72" height="72" viewBox="0 0 24 24" overflow="visible"><path d="M5 4.500h13M7.500 2l-2.500 2.500l2.500 2.500M15.500 2l2.500 2.500l-2.500 2.500" fill="none" stroke="#d0d0d0" stroke-width="1" /><rect x="2.500" y="8" width="6" height="11" fill="#dedede" stroke="#b8b8b8" stroke-width="1"/><rect x="15.500" y="6.500" width="6" height="14.500" fill="#dedede" stroke="#b8b8b8" stroke-width="1"/><path d="M5.500 6v2M5.500 19v3.500M18.500 21v2" fill="none" stroke="#b8b8b8" stroke-width="1" /></svg>
<path d="M2790.5 327.5 h21 l-10.5 11 z" fill="#9a9a9a"/>
<rect x="2828.3" y="296" width="2.6" height="56" fill="#c6c6c6" />
<svg x="2861" y="289" width="72" height="72" viewBox="0 0 24 24" overflow="visible"><path d="M5.500 19.800h16.500v-12.500" fill="none" stroke="#b4b4b4" stroke-width="1.6" /><rect x="2.500" y="4.300" width="17" height="13.500" fill="#fcfcfc" stroke="#3a3a38" stroke-width="1.400"/></svg>
<svg x="2965" y="289" width="72" height="72" viewBox="0 0 24 24" overflow="visible"><rect x="1.500" y="2.500" width="13" height="19.500" fill="#dedede" stroke="#b8b8b8" stroke-width="1"/><circle cx="7" cy="8" r="2" fill="none" stroke="#cfcfcf" stroke-width="1" /><path d="M2.500 21l11.500-10" stroke="#c4c4c4" stroke-width="2.500"/><path d="M14.500 2.500h8v13" fill="none" stroke="#b8b8b8" stroke-width="1" stroke-dasharray="2.500 1.500"/><rect x="16" y="16.500" width="6.500" height="6.500" fill="#f6f6f6" stroke="#b8b8b8" stroke-width="1"/><path d="M12.500 21.500h4M15.500 18.500v6M22.500 16.500h2" fill="none" stroke="#b8b8b8" stroke-width="1" /></svg>
<svg x="3060" y="289" width="72" height="72" viewBox="0 0 24 24" overflow="visible"><path d="M3 20.500l14.500-16l5 4.500l-14.500 16z" fill="#bdbdbd"/><path d="M14.500 7.500l3-3.300l5 4.500l-3 3.300z" fill="#dedede"/><path d="M3.500 8l3-5.500l6.500-1l-2 3.500l2.500-.5l-9 7z" fill="#d0d0d0"/></svg>
<path d="M3159.5 327.5 h21 l-10.5 11 z" fill="#9a9a9a"/>
<rect x="3196.8" y="296" width="2.6" height="56" fill="#c6c6c6" />
<svg x="3226" y="289" width="72" height="72" viewBox="0 0 24 24" overflow="visible"><path d="M2.500 21.500l7.500-9.500M12.500 9.500l8.500-9" fill="none" stroke="#3a3a38" stroke-width="1" /><rect x=".5" y="19.500" width="3.500" height="3.500" fill="#3a3a38"/><rect x="19" y="-1.500" width="3.500" height="3.500" fill="#3a3a38"/><rect x="9.500" y="9" width="3" height="3" fill="#fff" stroke="#0063b1" stroke-width="1"/><path d="M12.500 13.500l2 10.500l7.500-6.500z" fill="#fcfcfc" stroke="#555" stroke-width="1" stroke-linejoin="miter"/></svg>
<svg x="3332" y="289" width="72" height="72" viewBox="0 0 24 24" overflow="visible"><path d="M13.500 2l8.500 5.500l-2 3l-2.500-1l-6 9l-5.500-3.500l6-9l-1.500-2z" fill="#f8db8f" stroke="#ed8733" stroke-width="1" stroke-linejoin="round"/><path d="M6.500 15.500l4.500 3l-5 2.500l-3.500 1.500l1.500-3z" fill="#d9d9d9" stroke="#797774" stroke-width=".8"/><path d="M2.500 22.500l2-2.500" stroke="#3a3a38" stroke-width="1.300"/></svg>
<svg x="3433" y="289" width="72" height="72" viewBox="0 0 24 24" overflow="visible"><g transform="translate(-2.300,-1)"><path d="M3 6.500l3-3h10v10l-3 3h-10z" fill="#dedede" stroke="#b8b8b8" stroke-width="1"/><path d="M3 6.500h10v10M13 6.500l3-3" fill="none" stroke="#b8b8b8" stroke-width="1" /><path d="M10 21.500l17.500-19" fill="none" stroke="#cfcfcf" stroke-width="1" /><rect x="19.500" y="15.500" width="8" height="8" fill="#dedede" stroke="#b8b8b8" stroke-width="1"/></g></svg>
<!-- sidebar -->
<rect x="3791" y="406.5" width="6" height="6" fill="#3a3a3a" />
<rect x="3791" y="419" width="6" height="6" fill="#3a3a3a" />
<rect x="3791" y="431.5" width="6" height="6" fill="#3a3a3a" />
<rect x="3791" y="444" width="6" height="6" fill="#3a3a3a" />
<text x="3820" y="443.5" font-size="36" fill="#111" textLength="190" lengthAdjust="spacingAndGlyphs" font-weight="bold" >Navigateur</text>
<path d="M4842 418 L4864 440 M4864 418 L4842 440" stroke="#444" stroke-width="3" fill="none"/>
<path d="M4921 424.5 h32 M4921 433.5 h32 M4921 442.5 h32" stroke="#444" stroke-width="3" fill="none"/>
<svg x="3824" y="505" width="48" height="48" viewBox="0 0 16 16" overflow="visible"><path d="M2.500 .3v15.400" fill="none" stroke="#b8b8b8" stroke-width="1" /><path d="M12.500 .9v14.200l-7.300-7.100z" fill="none" stroke="#b8b8b8" stroke-width="1" /></svg>
<svg x="3902" y="505" width="48" height="48" viewBox="0 0 16 16" overflow="visible"><path d="M11.500 .9v14.200l-7.300-7.100z" fill="none" stroke="#b8b8b8" stroke-width="1" /></svg>
<svg x="3980" y="505" width="48" height="48" viewBox="0 0 16 16" overflow="visible"><path d="M4.500 .9v14.200l7.300-7.100z" fill="none" stroke="#555" stroke-width="1" /></svg>
<svg x="4056" y="505" width="48" height="48" viewBox="0 0 16 16" overflow="visible"><path d="M13.500 .3v15.400" fill="none" stroke="#555" stroke-width="1" /><path d="M3.500 .9v14.200l7.300-7.100z" fill="none" stroke="#555" stroke-width="1" /></svg>
<rect x="4128" y="505" width="2.5" height="48" fill="#c4c4c4" />
<svg x="4153" y="505" width="48" height="48" viewBox="0 0 16 16" overflow="visible"><rect x=".5" y=".5" width="8" height="8" fill="#fff" stroke="#3a3a38" stroke-width="1"/><rect x="7.500" y="7" width="8" height="8.500" fill="#fff" stroke="#3a3a38" stroke-width="1"/><path d="M2 8.500c0 3 2.500 4 8.500 4M8.500 10l2.500 2.500l-2.500 2.500" fill="none" stroke="#1e8bcd" stroke-width="1.2" /></svg>
<path d="M4227 530.5 h21 l-10.5 11 z" fill="#000"/>
<svg x="4267" y="505" width="48" height="48" viewBox="0 0 16 16" overflow="visible"><rect x=".5" y="5.500" width="8.500" height="8.500" fill="none" stroke="#3a3a38" stroke-width="1" /><circle cx="11" cy="5" r="4.500" fill="#f3f3f3" stroke="#3a3a38" stroke-width="1"/><path d="M6 10.500l5-5l5 5l-5 5z" fill="#f3f3f3" stroke="#555" stroke-width="1"/></svg>
<path d="M4340.5 530.5 h21 l-10.5 11 z" fill="#000"/>
<rect x="3808.5" y="583.5" width="1047" height="1902" fill="#fff" stroke="#84858c" stroke-width="3"/>
<rect x="3810" y="584.5" width="1044" height="59" fill="#0078d7" />
<rect x="3821" y="601" width="25" height="25" fill="#fdfdfd" stroke="#b5b5b5" stroke-width="2.5"/>
<path d="M3826 613.5 h15" stroke="#3a4a8a" stroke-width="3"/>
<svg x="3869.5" y="589.5" width="48" height="48" viewBox="0 0 16 16" overflow="visible"><path d="M3.500 .5h6l4 4v11h-10z" fill="#fff" stroke="#3a3a38" stroke-width="1"/><path d="M9.500 .5v4h4" fill="none" stroke="#3a3a38" stroke-width="1" /><rect x="5.500" y="8.500" width="3.500" height="4" fill="#f8db8f" stroke="#ed8733" stroke-width="1"/><circle cx="10.500" cy="10.500" r="1.800" fill="#83beec" stroke="#1e8bcd" stroke-width=".8"/></svg>
<text x="3935" y="627.5" font-size="35" fill="#fff" textLength="125" lengthAdjust="spacingAndGlyphs" >Diapo 1</text>
<svg x="3923" y="642.7" width="60" height="60" viewBox="0 0 20 20" overflow="visible"><rect x="1" y="4.500" width="4" height="13.500" fill="#f8db8f" stroke="#ed8733" stroke-width="1"/><rect x="8" y="2.500" width="12" height="3.500" fill="#b9b9b9" stroke="#8a8a8a" stroke-width=".8"/><circle cx="14.500" cy="13.500" r="5" fill="#5b9ee0" stroke="#1e8bcd" stroke-width="1"/></svg>
<text x="4003" y="686.7" font-size="35" fill="#1a1a1a" textLength="558.5" lengthAdjust="spacingAndGlyphs" >Forme 1 (Texte de titre 'Cliquez ...')</text>
<svg x="3923" y="701.9" width="60" height="60" viewBox="0 0 20 20" overflow="visible"><rect x="1" y="4.500" width="4" height="13.500" fill="#f8db8f" stroke="#ed8733" stroke-width="1"/><rect x="8" y="2.500" width="12" height="3.500" fill="#b9b9b9" stroke="#8a8a8a" stroke-width=".8"/><circle cx="14.500" cy="13.500" r="5" fill="#5b9ee0" stroke="#1e8bcd" stroke-width="1"/></svg>
<text x="4003" y="745.9" font-size="35" fill="#1a1a1a" textLength="583" lengthAdjust="spacingAndGlyphs" >Forme 2 (Cadre de texte 'Cliquez ...')</text>
<rect x="3821" y="778.6" width="25" height="25" fill="#fdfdfd" stroke="#b5b5b5" stroke-width="2.5"/>
<path d="M3826 791.1 h15" stroke="#3a4a8a" stroke-width="3"/>
<svg x="3869.5" y="767.1" width="48" height="48" viewBox="0 0 16 16" overflow="visible"><path d="M3.500 .5h6l4 4v11h-10z" fill="#fff" stroke="#3a3a38" stroke-width="1"/><path d="M9.500 .5v4h4" fill="none" stroke="#3a3a38" stroke-width="1" /><rect x="5.500" y="8.500" width="3.500" height="4" fill="#f8db8f" stroke="#ed8733" stroke-width="1"/><circle cx="10.500" cy="10.500" r="1.800" fill="#83beec" stroke="#1e8bcd" stroke-width=".8"/></svg>
<text x="3935" y="805.1" font-size="35" fill="#1a1a1a" textLength="126" lengthAdjust="spacingAndGlyphs" >Diapo 2</text>
<svg x="3923" y="820.3" width="60" height="60" viewBox="0 0 20 20" overflow="visible"><rect x="1" y="4.500" width="4" height="13.500" fill="#f8db8f" stroke="#ed8733" stroke-width="1"/><rect x="8" y="2.500" width="12" height="3.500" fill="#b9b9b9" stroke="#8a8a8a" stroke-width=".8"/><circle cx="14.500" cy="13.500" r="5" fill="#5b9ee0" stroke="#1e8bcd" stroke-width="1"/></svg>
<text x="4003" y="864.3" font-size="35" fill="#1a1a1a" textLength="558.5" lengthAdjust="spacingAndGlyphs" >Forme 1 (Texte de titre 'Cliquez ...')</text>
<svg x="3923" y="879.5" width="60" height="60" viewBox="0 0 20 20" overflow="visible"><rect x="1" y="4.500" width="4" height="13.500" fill="#f8db8f" stroke="#ed8733" stroke-width="1"/><rect x="8" y="2.500" width="12" height="3.500" fill="#b9b9b9" stroke="#8a8a8a" stroke-width=".8"/><circle cx="14.500" cy="13.500" r="5" fill="#5b9ee0" stroke="#1e8bcd" stroke-width="1"/></svg>
<text x="4003" y="923.5" font-size="35" fill="#1a1a1a" textLength="380" lengthAdjust="spacingAndGlyphs" >Forme 2 (Texte de plan)</text>
<rect x="3808.5" y="2499.5" width="1047" height="67" fill="#fff" stroke="#84858c" stroke-width="3"/>
<rect x="4803" y="2503" width="50" height="60" fill="#fdfdfd" stroke="#d0d0d0" stroke-width="2"/>
<path d="M4816 2527 l12 12 l12 -12" stroke="#555" stroke-width="3" fill="none"/>
<text x="3812" y="2546" font-size="35" fill="#1a1a1a" textLength="188" lengthAdjust="spacingAndGlyphs" >Sans nom 1</text>
<svg x="4901" y="492" width="72" height="72" viewBox="0 0 24 24" overflow="visible"><rect x="2" y="2.500" width="20" height="18.500" fill="#fff" stroke="#3a3a38" stroke-width="1"/><rect x="2" y="2.500" width="20" height="2.500" fill="#555"/><path d="M6 10.500h12M6 15.500h12" fill="none" stroke="#3a3a38" stroke-width="1" /><rect x="12.500" y="9" width="2.500" height="2.500" fill="#83beec" stroke="#1e8bcd" stroke-width=".8"/><rect x="8.500" y="14" width="2.500" height="2.500" fill="#83beec" stroke="#1e8bcd" stroke-width=".8"/></svg>
<svg x="4901" y="604" width="72" height="72" viewBox="0 0 24 24" overflow="visible"><path d="M2.500 17.500l6-15h1.500l4 10.500" fill="none" stroke="#3a3a38" stroke-width="1.6" /><path d="M5 12h7.500" fill="none" stroke="#3a3a38" stroke-width="1.4" /><path d="M22.500 8c-3 2-6 5.500-7.500 9l1.800 1.400c2.700-3 5-6.300 5.700-10.400z" fill="#fff" stroke="#3a3a38" stroke-width="1"/><path d="M14.800 17.500c-3 .3-3.300 2.300-5.300 3.300c2.500 1.200 6.200.7 7.200-1.800z" fill="#83beec" stroke="#1e8bcd" stroke-width="1"/></svg>
<svg x="4901" y="711" width="72" height="72" viewBox="0 0 24 24" overflow="visible"><path d="M1.500 19.500v-16h7l2.500 2.500h9v3.500" fill="#fff" stroke="#ed8733" stroke-width="1"/><path d="M1.500 19.500l3-10h19.500" fill="none" stroke="#ed8733" stroke-width="1" /><path d="M1.500 19.500l3-10h6v10z" fill="#f8db8f" stroke="#ed8733" stroke-width="1"/><rect x="10" y="10.500" width="13" height="12" fill="#fff" stroke="#3a3a38" stroke-width="1"/><circle cx="14" cy="14" r="1.300" fill="#ed8733"/><path d="M10.500 22v-3l3.500-3l2.500 2l3-3l3 3v4z" fill="#83beec" stroke="#0063b1" stroke-width=".7"/></svg>
<rect x="4886" y="805" width="101" height="101" rx="6" fill="#cce4f7" stroke="#99d1ff" stroke-width="3"/>
<svg x="4901" y="820" width="72" height="72" viewBox="0 0 24 24" overflow="visible"><circle cx="12" cy="12" r="10" fill="#f7fbfe" stroke="#5e5e5c" stroke-width="1.100"/><path d="M17.300 6.700l-2.500 7.800l-8.100 2.800l2.500-7.800z" fill="#2a8bd6"/><circle cx="12" cy="12" r="1.600" fill="#fff"/></svg>
<svg x="4901" y="930" width="72" height="72" viewBox="0 0 24 24" overflow="visible"><path d="M12 1.800l10.200 10.200l-10.200 10.200l-10.200-10.200z" fill="#fcfcfc" stroke="#555" stroke-width="1.200"/></svg>
<svg x="4901" y="1039" width="72" height="72" viewBox="0 0 24 24" overflow="visible"><path d="M9 4v16.500h15" fill="none" stroke="#3a3a38" stroke-width="1" /><path d="M9 4h15" fill="none" stroke="#3a3a38" stroke-width="1" /><rect x="9.500" y="4.500" width="14.500" height="15.500" fill="#fafafa"/><path d="M12.500 9h11.500" fill="none" stroke="#1e8bcd" stroke-width="2" /><path d="M3 4.500h4M1 8h6M3 11.500h4M1 15h6M3 18.500h4" fill="none" stroke="#ed8733" stroke-width="1" /></svg>
<svg x="4901" y="1145" width="72" height="72" viewBox="0 0 24 24" overflow="visible"><path d="M9.500 3l2.300 6l6.200.3l-4.900 3.900l1.700 6l-5.300-3.400l-5.300 3.400l1.700-6l-4.900-3.900l6.200-.3z" fill="#f8db8f" stroke="#ed8733" stroke-width="1.100" stroke-linejoin="round"/><path d="M14 4.500h8M17 7.500h6M16 10.500h8M17 13.500h6M16 16.500h8" fill="none" stroke="#ed8733" stroke-width="1" /></svg>
<svg x="4901" y="1257" width="72" height="72" viewBox="0 0 24 24" overflow="visible"><rect x="1" y="2.500" width="22.500" height="19" fill="#1e8bcd" stroke="#3a3a38" stroke-width="1"/><rect x="3.500" y="5" width="17.500" height="3" fill="#1e8bcd" stroke="#fff" stroke-width="1"/><rect x="3.500" y="11" width="17.500" height="8" fill="#1e8bcd" stroke="#fff" stroke-width="1"/></svg>
<!-- statusbar -->
<rect x="0" y="2594" width="5000" height="3" fill="#a0a0a0" />
<rect x="250" y="2605" width="2.5" height="50" fill="#bcbcbc" />
<rect x="1606" y="2605" width="2.5" height="50" fill="#bcbcbc" />
<rect x="2513" y="2605" width="2.5" height="50" fill="#bcbcbc" />
<rect x="3100" y="2605" width="2.5" height="50" fill="#bcbcbc" />
<rect x="3173" y="2605" width="2.5" height="50" fill="#bcbcbc" />
<rect x="3265" y="2605" width="2.5" height="50" fill="#bcbcbc" />
<rect x="4322" y="2605" width="2.5" height="50" fill="#bcbcbc" />
<rect x="4394" y="2605" width="2.5" height="50" fill="#bcbcbc" />
<rect x="4844" y="2605" width="2.5" height="50" fill="#bcbcbc" />
<text x="35" y="2645.5" font-size="35" fill="#1a1a1a" textLength="205" lengthAdjust="spacingAndGlyphs" >Diapo 1 de 2</text>
<text x="1639" y="2645.5" font-size="35" fill="#1a1a1a" textLength="129" lengthAdjust="spacingAndGlyphs" >Beehive</text>
<text x="2609" y="2650" font-size="35" fill="#1a1a1a" textLength="183" lengthAdjust="spacingAndGlyphs" >6,54 / -0,54</text>
<text x="2893" y="2650" font-size="35" fill="#1a1a1a" textLength="172" lengthAdjust="spacingAndGlyphs" >0,00 x 0,00</text>
<text x="3660" y="2645.5" font-size="35" fill="#1a1a1a" textLength="277" lengthAdjust="spacingAndGlyphs" >Français (France)</text>
<text x="4874" y="2645.5" font-size="35" fill="#1a1a1a" textLength="95" lengthAdjust="spacingAndGlyphs" >108 %</text>
<g fill="none" stroke="#444" stroke-width="2.200"><path d="M2566 2622 h27 v22 h-39 v-8"/></g><path d="M2546 2617 h15 M2553.5 2609 v16" stroke="#1e8bcd" stroke-width="3"/>
<g fill="none" stroke="#444" stroke-width="2.200"><rect x="2846" y="2627" width="30" height="17"/></g><path d="M2832 2621 h9 M2836.5 2621 v18 M2832 2639 h9 M2848 2613 v9 M2848 2617.5 h27 M2875 2613 v9" stroke="#1e8bcd" stroke-width="3" fill="none"/>
<g fill="none" stroke="#a0a0a0" stroke-width="3"><path d="M3118 2604.500 h46 v46 h-40 l-6 -6 z M3127 2604.500 v17 h28 v-17 M3127 2650 v-16 h26 v16"/><rect x="3133" y="2638" width="8" height="12" fill="#a0a0a0" stroke="none"/></g>
<g stroke="#1e8bcd" stroke-width="3.5" fill="#1e8bcd"><path d="M4361 2615 v34 M4344 2632 h34" fill="none"/><path d="M4361 2610 l6 8 h-12 z M4361 2654 l6 -8 h-12 z M4339 2632 l8 -6 v12 z M4383 2632 l-8 -6 v12 z" stroke="none"/></g>
<rect x="4425" y="2628" width="31" height="6" fill="#333" />
<rect x="4472" y="2632" width="306" height="4" fill="#7a7a7a" />
<rect x="4619" y="2618" width="12" height="28" fill="#d8d8d8" stroke="#555" stroke-width="2.5"/>
<path d="M4794 2631 h31 M4809.5 2616 v30" stroke="#222" stroke-width="6" fill="none"/>
<!-- menu -->
<rect x="345.0" y="159.5" width="695.0" height="1943.5" fill="#000" opacity="0.05"/>
<rect x="345.0" y="159.5" width="692.0" height="1940.5" fill="#000" opacity="0.126"/>
<rect x="346.5" y="159.5" width="687.5" height="1937.5" fill="#000" opacity="0.193"/>
<rect x="348.0" y="159.5" width="683.0" height="1934.5" fill="#000" opacity="0.157"/>
<rect x="326.5" y="144.0" width="700" height="1945.5" fill="#f9f9f9" stroke="#a0a0a0" stroke-width="3"/>
<path d="M325 2089.5 H1028 M1026.5 142.5 V2091" stroke="#6c6c6c" stroke-width="3" fill="none"/>
<rect x="347" y="148.5" width="69" height="69" rx="6" fill="#cce4f7" stroke="#a6d2f5" stroke-width="3"/>
<svg x="357" y="161" width="48" height="48" viewBox="0 0 16 16" overflow="visible"><rect x=".5" y="1.700" width="15.500" height="11.500" fill="none" stroke="#3a3a38" stroke-width="1" /><rect x="2.500" y="3.700" width="11.500" height="2" fill="none" stroke="#3a3a38" stroke-width="1" /><rect x="2.500" y="7.500" width="11.500" height="3.800" fill="none" stroke="#3a3a38" stroke-width="1" /></svg>
<text x="450" y="200" font-size="35" fill="#111" textLength="117" lengthAdjust="spacingAndGlyphs" >Normal</text><rect x="450.0" y="206.3" width="26.2" height="3" fill="#111"/>
<svg x="357" y="229.6" width="48" height="48" viewBox="0 0 16 16" overflow="visible"><rect x=".5" y="1" width="15.500" height="12.500" fill="none" stroke="#3a3a38" stroke-width="1" /><circle cx="4.300" cy="5" r="1.050" fill="none" stroke="#3a3a38" stroke-width="1" /><circle cx="4.300" cy="9.500" r="1.050" fill="none" stroke="#3a3a38" stroke-width="1" /><path d="M7.500 4h6M7.500 6h6M7.500 8.600h6" fill="none" stroke="#3a3a38" stroke-width="1" /><path d="M7.500 10.700h6" fill="none" stroke="#3a3a38" stroke-width="1.3" /></svg>
<text x="450" y="268.6" font-size="35" fill="#111" textLength="70" lengthAdjust="spacingAndGlyphs" >Plan</text><rect x="450.0" y="274.9" width="23.3" height="3" fill="#111"/>
<svg x="357" y="298.3" width="48" height="48" viewBox="0 0 16 16" overflow="visible"><rect x="1.500" y=".3" width="13.300" height="15.700" fill="none" stroke="#3a3a38" stroke-width="1" /><rect x="3.800" y="2.600" width="8.700" height="2" fill="none" stroke="#3a3a38" stroke-width="1" /><path d="M3.300 7.700h9.700M3.300 10.600h9.700M3.300 13.500h9.700" fill="none" stroke="#3a3a38" stroke-width="1" /></svg>
<text x="450" y="337.3" font-size="35" fill="#111" textLength="98" lengthAdjust="spacingAndGlyphs" >Notes</text><rect x="508.4" y="343.6" width="20.9" height="3" fill="#111"/>
<svg x="357" y="366.8" width="48" height="48" viewBox="0 0 16 16" overflow="visible"><rect x=".5" y=".7" width="6" height="6.100" fill="none" stroke="#3a3a38" stroke-width="1" /><rect x="9.700" y=".7" width="6.100" height="6.100" fill="none" stroke="#3a3a38" stroke-width="1" /><rect x=".5" y="10" width="6" height="6.100" fill="none" stroke="#3a3a38" stroke-width="1" /><rect x="9.700" y="10" width="6.100" height="6.100" fill="none" stroke="#3a3a38" stroke-width="1" /></svg>
<text x="450" y="405.8" font-size="35" fill="#111" textLength="282" lengthAdjust="spacingAndGlyphs" >Trieuse de diapos</text><rect x="577.4" y="412.1" width="19.8" height="3" fill="#111"/>
<svg x="357" y="435.3" width="48" height="48" viewBox="0 0 16 16" overflow="visible"><rect x=".5" y="1.400" width="15.500" height="12.400" fill="#1e8bcd" stroke="#3a3a38" stroke-width="1"/><rect x="2.800" y="3.700" width="11" height="2" fill="#1e8bcd" stroke="#fff" stroke-width="1"/><rect x="2.800" y="7.600" width="11" height="4" fill="#1e8bcd" stroke="#fff" stroke-width="1"/></svg>
<text x="450" y="474.3" font-size="35" fill="#111" textLength="260.3" lengthAdjust="spacingAndGlyphs" >Diapo maîtresse</text><rect x="450.0" y="480.6" width="25.8" height="3" fill="#111"/>
<svg x="357" y="503.8" width="48" height="48" viewBox="0 0 16 16" overflow="visible"><rect x="1.500" y=".3" width="13.300" height="15.700" fill="#1e8bcd" stroke="#3a3a38" stroke-width="1"/><rect x="3.800" y="2.600" width="8.700" height="2" fill="#1e8bcd" stroke="#fff" stroke-width="1"/><path d="M3.300 7.700h9.700M3.300 10.600h9.700M3.300 13.500h9.700" stroke="#fff" stroke-width="1"/></svg>
<text x="450" y="542.8" font-size="35" fill="#111" textLength="276" lengthAdjust="spacingAndGlyphs" >Notes maîtresses</text><rect x="552.5" y="549.1" width="29.6" height="3" fill="#111"/>
<svg x="357" y="572.5" width="48" height="48" viewBox="0 0 16 16" overflow="visible"><rect x="1.500" y=".3" width="13.300" height="15.700" fill="#1e8bcd" stroke="#3a3a38" stroke-width="1"/><path d="M3.500 2.800h9.500v11h-9.500z M3.500 6.400h9.500 M3.500 10.200h9.500 M7.200 2.800v11" fill="none" stroke="#fff" stroke-width="1"/></svg>
<text x="450" y="611.5" font-size="35" fill="#111" textLength="295.3" lengthAdjust="spacingAndGlyphs" >Prospectus maître</text><rect x="450.0" y="617.8" width="24.3" height="3" fill="#111"/>
<rect x="426" y="637.8" width="591" height="3" fill="#d4d4d4" />
<text x="450" y="692.7" font-size="35" fill="#111" textLength="342.7" lengthAdjust="spacingAndGlyphs" >Interface utilisateur...</text><rect x="450.0" y="699" width="10.3" height="3" fill="#111"/>
<text x="450" y="761.2" font-size="35" fill="#111" textLength="232" lengthAdjust="spacingAndGlyphs" >Barres d'outils</text><rect x="637.0" y="767.5" width="10.3" height="3" fill="#111"/>
<path d="M984 740.2 l10 9.5 l-10 9.5 z" fill="#000"/>
<rect x="426" y="787.5" width="591" height="3" fill="#d4d4d4" />
<svg x="357" y="803.3" width="48" height="48" viewBox="0 0 16 16" overflow="visible"><path d="M4 8.300l2.700 2.700l5.800-5.600" fill="none" stroke="#555" stroke-width="1.1" /></svg>
<text x="450" y="842.3" font-size="35" fill="#111" textLength="189.3" lengthAdjust="spacingAndGlyphs" >Barre d'état</text><rect x="450.0" y="848.6" width="24.6" height="3" fill="#111"/>
<text x="450" y="910.8" font-size="35" fill="#111" textLength="192" lengthAdjust="spacingAndGlyphs" >Volet Diapo</text><rect x="600.2" y="917.1" width="20.9" height="3" fill="#111"/>
<text x="450" y="979.3" font-size="35" fill="#111" textLength="414.7" lengthAdjust="spacingAndGlyphs" >Affiche la barre d'onglets</text><rect x="450.0" y="985.6" width="25.3" height="3" fill="#111"/>
<rect x="426" y="1005.2" width="591" height="3" fill="#d4d4d4" />
<svg x="357" y="1022" width="48" height="48" viewBox="0 0 16 16" overflow="visible"><path d="M2.700 16v-15.500h8l3.500 3.500v12z" fill="#fdfdfd" stroke="#3a3a38" stroke-width="1"/><path d="M10.700 .5v3.500h3.500" fill="none" stroke="#3a3a38" stroke-width="1" /><path d="M10.900 .9l3 3h-3z" fill="#b5b5b5"/><rect x=".3" y="10.800" width="15.700" height="3.500" fill="#f8db8f" stroke="#ed8733" stroke-width="1"/><path d="M2.800 10.800v1.500M5.300 10.800v1.500M7.800 10.800v1.500M10.300 10.800v1.500M12.800 10.800v1.500" stroke="#ed8733" stroke-width=".8"/></svg>
<text x="450" y="1061" font-size="35" fill="#111" textLength="108" lengthAdjust="spacingAndGlyphs" >Règles</text><rect x="450.0" y="1067.3" width="25.1" height="3" fill="#111"/>
<text x="776.3" y="1061" font-size="35" fill="#111" textLength="194" lengthAdjust="spacingAndGlyphs" >Ctrl+Maj+R</text>
<svg x="357" y="1090.5" width="48" height="48" viewBox="0 0 16 16" overflow="visible"><rect x=".5" y=".7" width="15.500" height="15.500" fill="none" stroke="#3a3a38" stroke-width="1" /><rect x="2.7" y="2.9000000000000004" width="1.800" height="1.800" fill="#3a96dd"/><rect x="2.7" y="7.6000000000000005" width="1.800" height="1.800" fill="#3a96dd"/><rect x="2.7" y="12.399999999999999" width="1.800" height="1.800" fill="#3a96dd"/><rect x="7.4" y="2.9000000000000004" width="1.800" height="1.800" fill="#3a96dd"/><rect x="7.4" y="7.6000000000000005" width="1.800" height="1.800" fill="#3a96dd"/><rect x="7.4" y="12.399999999999999" width="1.800" height="1.800" fill="#3a96dd"/><rect x="12.2" y="2.9000000000000004" width="1.800" height="1.800" fill="#3a96dd"/><rect x="12.2" y="7.6000000000000005" width="1.800" height="1.800" fill="#3a96dd"/><rect x="12.2" y="12.399999999999999" width="1.800" height="1.800" fill="#3a96dd"/></svg>
<text x="450" y="1129.5" font-size="35" fill="#111" textLength="335.3" lengthAdjust="spacingAndGlyphs" >Grille et lignes guide</text><rect x="491.1" y="1135.8" width="8.2" height="3" fill="#111"/>
<path d="M984 1108.5 l10 9.5 l-10 9.5 z" fill="#000"/>
<text x="450" y="1198" font-size="35" fill="#111" textLength="298.7" lengthAdjust="spacingAndGlyphs" >Guides de capture</text><rect x="450.0" y="1204.3" width="28.4" height="3" fill="#111"/>
<path d="M984 1177 l10 9.5 l-10 9.5 z" fill="#000"/>
<rect x="426" y="1224.5" width="591" height="3" fill="#d4d4d4" />
<rect x="347" y="1227.8" width="69" height="69" rx="6" fill="#cce4f7" stroke="#a6d2f5" stroke-width="3"/>
<svg x="357" y="1240.3" width="48" height="48" viewBox="0 0 16 16" overflow="visible"><path d="M4 3.400v-2.500h12.100v8.300h-2.600" fill="none" stroke="#3a3a38" stroke-width="1" /><path d="M.5 3.900h12.500v8.100h-6.500l-3 3v-3h-3z" fill="#fff" stroke="#3a3a38" stroke-width="1"/></svg>
<text x="450" y="1279.3" font-size="35" fill="#111" textLength="235.3" lengthAdjust="spacingAndGlyphs" >Commentaires</text><rect x="476.1" y="1285.6" width="20.1" height="3" fill="#111"/>
<text x="450" y="1348" font-size="35" fill="#111" textLength="398" lengthAdjust="spacingAndGlyphs" >Couleur/Niveaux de gris</text><rect x="450.0" y="1354.3" width="26.9" height="3" fill="#111"/>
<path d="M984 1327 l10 9.5 l-10 9.5 z" fill="#000"/>
<rect x="347" y="1380.5" width="69" height="69" rx="6" fill="#cce4f7" stroke="#a6d2f5" stroke-width="3"/>
<svg x="357" y="1390" width="48" height="48" viewBox="0 0 16 16" overflow="visible"><rect x=".5" y="2" width="15.500" height="13.500" fill="#fff" stroke="#3a3a38" stroke-width="1"/><rect x=".5" y="2" width="15.500" height="2.300" fill="#7a7875" stroke="#3a3a38" stroke-width="1"/><rect x="11" y="4.800" width="5" height="10.700" fill="#83beec" stroke="#0063b1" stroke-width="1"/><path d="M13 11h-7.300M8.300 8l-3 3l3 3" fill="none" stroke="#1e8bcd" stroke-width="1.2" /></svg>
<text x="450" y="1429" font-size="35" fill="#111" textLength="196" lengthAdjust="spacingAndGlyphs" >Volet latéral</text><rect x="543.8" y="1435.3" width="8.4" height="3" fill="#111"/>
<text x="848" y="1429" font-size="35" fill="#111" textLength="122.3" lengthAdjust="spacingAndGlyphs" >Ctrl+F5</text>
<svg x="357" y="1459" width="48" height="48" viewBox="0 0 16 16" overflow="visible"><path d="M16 7.500v-4.600h-15.500v11.200h6" fill="none" stroke="#3a3a38" stroke-width="1"/><rect x="3.300" y="4.900" width="10.200" height="1.700" fill="#797774"/><path d="M3.300 8.200h1M5.300 8.200h2M3.300 10.400h1M5.300 10.400h1.500M3.300 12.400h1M5.300 12.400h1.500" stroke="#bbb" stroke-width="1"/><g transform="translate(11.700,12)"><circle r="3.700" fill="#e6f2fb" stroke="#1e8bcd" stroke-width="1.500" stroke-dasharray="1.450 1.450"/><circle r="2.600" fill="#eef7fd" stroke="#1e8bcd" stroke-width=".9"/><circle r="1" fill="#1e8bcd"/></g></svg>
<text x="450" y="1498" font-size="35" fill="#111" textLength="372.7" lengthAdjust="spacingAndGlyphs" >Mise en page de diapo</text>
<svg x="357" y="1528" width="48" height="48" viewBox="0 0 16 16" overflow="visible"><path d="M16.300 2.900h-8.800v11.500h8.800" fill="none" stroke="#3a3a38" stroke-width="1" /><rect x="9" y="4.300" width="7.300" height="2" fill="#1e8bcd"/><path d="M2.200 2.900h2.800M.8 5.800h4.200M0 8.700h5M.8 11.800h4.200" fill="none" stroke="#ed8733" stroke-width="1" /></svg>
<text x="450" y="1567" font-size="35" fill="#111" textLength="159" lengthAdjust="spacingAndGlyphs" >Transition</text><rect x="523.7" y="1573.3" width="18.3" height="3" fill="#111"/>
<svg x="357" y="1597" width="48" height="48" viewBox="0 0 16 16" overflow="visible"><path d="M6.200 2.300l1.500 3.900l4.600.2l-3.600 2.900l1.200 4.500l-3.700-2.500l-3.700 2.500l1.200-4.500l-3.600-2.900l4.600-.2z" fill="#f8db8f" stroke="#ed8733" stroke-width="1.100" stroke-linejoin="round"/><path d="M9.200 4.900h6.200M13.400 7.200h2M13.400 9.100h2M10.500 11.200h5M11.500 13.300h4" fill="none" stroke="#ed8733" stroke-width="1" /></svg>
<text x="450" y="1636" font-size="35" fill="#111" textLength="172" lengthAdjust="spacingAndGlyphs" >Animation</text>
<svg x="357" y="1665.5" width="48" height="48" viewBox="0 0 16 16" overflow="visible"><path d="M.3 13.300l5.200-12.700h1.200l3.700 9.300" fill="none" stroke="#3a3a38" stroke-width="1.4" /><path d="M2.500 9.300h6.300" fill="none" stroke="#3a3a38" stroke-width="1.2" /><path d="M15.700 3.500c-2.700 1.600-5.200 4.600-6.700 7.900l1.500 1.200c2.500-2.500 4.500-5.500 5.200-9.100z" fill="#fff" stroke="#3a3a38" stroke-width="1"/><path d="M9.300 11.300c-2.700-.3-4.200.8-5.300 3.400c2.600 1.400 6.300.7 7-1.900z" fill="#83beec" stroke="#0063b1" stroke-width="1"/></svg>
<text x="450" y="1704.5" font-size="35" fill="#111" textLength="95.3" lengthAdjust="spacingAndGlyphs" >Styles</text><rect x="483.1" y="1710.8" width="17.5" height="3" fill="#111"/>
<text x="911.3" y="1704.5" font-size="35" fill="#111" textLength="59" lengthAdjust="spacingAndGlyphs" >F11</text>
<svg x="357" y="1734.3" width="48" height="48" viewBox="0 0 16 16" overflow="visible"><path d="M.5 13v-12.500h4l1.700 2h6.600v2.500" fill="none" stroke="#ed8733" stroke-width="1" /><path d="M.5 13h4.700v-7h-2.200z" fill="#f8db8f" stroke="#ed8733" stroke-width="1"/><rect x="5.700" y="5.700" width="10" height="10.300" fill="#fff" stroke="#3a3a38" stroke-width="1"/><rect x="7.300" y="7.300" width="2.500" height="2.500" fill="#f8db8f" stroke="#ed8733" stroke-width=".8"/><path d="M6.200 15.500v-3l2-1.500l1.800 1.200l2.700-2l2.500 1.500v3.800z" fill="#83beec" stroke="#0063b1" stroke-width=".6"/></svg>
<text x="450" y="1773.3" font-size="35" fill="#111" textLength="114.7" lengthAdjust="spacingAndGlyphs" >Galerie</text><rect x="450.0" y="1779.6" width="27.7" height="3" fill="#111"/>
<svg x="357" y="1803.5" width="48" height="48" viewBox="0 0 16 16" overflow="visible"><circle cx="8.100" cy="8.400" r="7.700" fill="#fdfdfd" stroke="#5e5e5c" stroke-width="1.100"/><path d="M12.600 4l-1.600 5.700l-6.800 3.100l1.600-5.700z" fill="#2a8bd6"/><circle cx="8.300" cy="8.400" r="1.050" fill="#fff"/></svg>
<text x="450" y="1842.5" font-size="35" fill="#111" textLength="183.7" lengthAdjust="spacingAndGlyphs" >Navigateur</text><rect x="498.5" y="1848.8" width="19.0" height="3" fill="#111"/>
<text x="761.3" y="1842.5" font-size="35" fill="#111" textLength="209" lengthAdjust="spacingAndGlyphs" >Ctrl+Maj+F5</text>
<text x="450" y="1911.5" font-size="35" fill="#111" textLength="285.3" lengthAdjust="spacingAndGlyphs" >Barre de couleurs</text><rect x="598.7" y="1917.8" width="18.1" height="3" fill="#111"/>
<rect x="426" y="1937.8" width="591" height="3" fill="#d4d4d4" />
<svg x="357" y="1953.7" width="48" height="48" viewBox="0 0 16 16" overflow="visible"><path d="M8.100 1.700v14M.6 8.700h14.600" fill="none" stroke="#2d8fd9" stroke-width="1.1" /><path d="M5.700 3.600l2.400-2.400l2.400 2.400M5.700 13.800l2.400 2.400l2.400-2.400M2.700 6.300l-2.400 2.400l2.400 2.400M13.200 6.300l2.400 2.400l-2.400 2.400" fill="none" stroke="#2d8fd9" stroke-width="1.1" /></svg>
<text x="450" y="1992.7" font-size="35" fill="#111" textLength="147" lengthAdjust="spacingAndGlyphs" >Déplacer</text>
<text x="450" y="2061.5" font-size="35" fill="#111" textLength="98.7" lengthAdjust="spacingAndGlyphs" >Zoom</text><rect x="450.0" y="2067.8" width="23.6" height="3" fill="#111"/>
<path d="M984 2040.5 l10 9.5 l-10 9.5 z" fill="#000"/>
<!-- annotations -->
<rect x="321.25" y="68.25" width="215.5" height="86.80000000000001" fill="none" stroke="#0a0c98" stroke-width="16.5"/>
<rect x="328.25" y="1297.55" width="705.2" height="83.20000000000005" fill="none" stroke="#0a0c98" stroke-width="16.5"/>
<circle cx="586.5" cy="213.5" r="118.5" fill="#0a0c98"/>
<circle cx="681.2" cy="1489.5" r="118.5" fill="#0a0c98"/>
<text x="593.5" y="267.8" font-size="155" fill="#fff" text-anchor="middle" >1</text>
<rect x="550" y="250" width="39.400" height="22" fill="#0a0c98"/><rect x="603.300" y="250" width="36" height="22" fill="#0a0c98"/>
<text x="682" y="1544.5" font-size="156" fill="#fff" textLength="76" lengthAdjust="spacingAndGlyphs" text-anchor="middle" >2</text>
</svg>
</body></html>
